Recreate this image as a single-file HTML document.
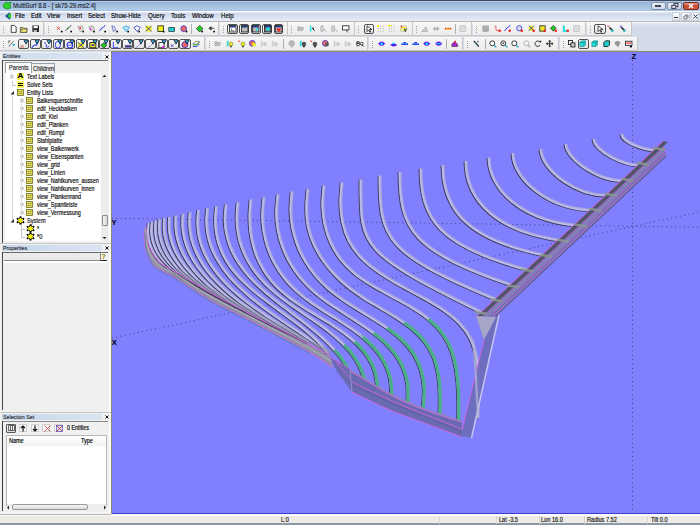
<!DOCTYPE html><html><head><meta charset="utf-8"><style>
*{margin:0;padding:0;box-sizing:border-box}
html,body{width:700px;height:525px;overflow:hidden;background:#f0f0f0;font-family:"Liberation Sans",sans-serif;}
.a{position:absolute}
.t{position:absolute;font-size:7px;line-height:8px;color:#000;white-space:nowrap;-webkit-text-stroke:0.15px currentColor}
svg{overflow:visible}
</style></head><body>
<div class="a" style="left:0px;top:0px;width:700px;height:11px;background:linear-gradient(#404858 0px,#404858 1px,#a8c8f0 1px,#a8c8f0 2px,#97b3d5 2px,#b3cde9 10px,#a0c0e6 10px);"></div>
<svg class="a" style="left:2px;top:1px" width="10" height="9" viewBox="0 0 10 9"><path d="M1 4l3-3 2 1 3-1-1 3 1 3-4 1-3-1z" fill="#2bd32b" stroke="#137a13" stroke-width=".6"/></svg>
<div class="t" style="left:13px;top:1.5px;font-size:7px;color:#1e2530;transform:scaleX(0.85);transform-origin:0 0;">MultiSurf 8.8 - [ sk75-29.ms2:4]</div>
<div class="a" style="left:650.5px;top:1.5px;width:15px;height:8px;background:linear-gradient(#e8eef7,#c9d6e8);border:1px solid #7f8fa6;border-radius:2px;"></div>
<div class="a" style="left:655px;top:5px;width:6px;height:2px;background:#fff;border:1px solid #445;"></div>
<div class="a" style="left:667px;top:1.5px;width:15px;height:8px;background:linear-gradient(#e8eef7,#c9d6e8);border:1px solid #7f8fa6;border-radius:2px;"></div>
<svg class="a" style="left:671px;top:2.5px" width="8" height="6" viewBox="0 0 8 6"><rect x="3" y=".5" width="4" height="3.2" fill="#dde" stroke="#334" stroke-width=".9"/><rect x=".8" y="2.3" width="4" height="3.2" fill="#dde" stroke="#334" stroke-width=".9"/></svg>
<div class="a" style="left:683px;top:1.5px;width:16px;height:8px;background:linear-gradient(#e8a090,#c8452c 50%,#d05a40);border:1px solid #7a3020;border-radius:2px;"></div>
<svg class="a" style="left:688px;top:2.5px" width="6" height="6" viewBox="0 0 6 6"><path d="M1 1l4 4M5 1l-4 4" stroke="#fff" stroke-width="1.4"/></svg>
<div class="a" style="left:0px;top:11px;width:700px;height:11px;background:linear-gradient(#ffffff 0px,#ffffff 1px,#e6eaf4 1px,#ccd6ea 3.5px,#d8e0f0 5px,#e2eafa 9.5px,#e4ecfc 10px,#b8b8b0 10px);"></div>
<svg class="a" style="left:3px;top:11px" width="10" height="10" viewBox="0 0 10 10"><path d="M7 1l-5 4 5 4-1-4z" fill="#1a3a9a"/><path d="M8 2l-4 3 4 3z" fill="#2c2"/></svg>
<div class="t" style="left:14.9px;top:12px;font-size:7px;color:#000;transform:scaleX(0.87);transform-origin:0 0;">File</div>
<div class="t" style="left:30.7px;top:12px;font-size:7px;color:#000;transform:scaleX(0.87);transform-origin:0 0;">Edit</div>
<div class="t" style="left:47.2px;top:12px;font-size:7px;color:#000;transform:scaleX(0.87);transform-origin:0 0;">View</div>
<div class="t" style="left:67.3px;top:12px;font-size:7px;color:#000;transform:scaleX(0.87);transform-origin:0 0;">Insert</div>
<div class="t" style="left:88.3px;top:12px;font-size:7px;color:#000;transform:scaleX(0.87);transform-origin:0 0;">Select</div>
<div class="t" style="left:110.8px;top:12px;font-size:7px;color:#000;transform:scaleX(0.87);transform-origin:0 0;">Show-Hide</div>
<div class="t" style="left:147.5px;top:12px;font-size:7px;color:#000;transform:scaleX(0.87);transform-origin:0 0;">Query</div>
<div class="t" style="left:170.7px;top:12px;font-size:7px;color:#000;transform:scaleX(0.87);transform-origin:0 0;">Tools</div>
<div class="t" style="left:191.8px;top:12px;font-size:7px;color:#000;transform:scaleX(0.87);transform-origin:0 0;">Window</div>
<div class="t" style="left:220.8px;top:12px;font-size:7px;color:#000;transform:scaleX(0.87);transform-origin:0 0;">Help</div>
<div class="a" style="left:671.5px;top:12px;width:8.5px;height:8.5px;background:linear-gradient(#fbfcfe,#e3e9f2);border:1px solid #c5cdd9;"></div>
<div class="a" style="left:681px;top:12px;width:8.5px;height:8.5px;background:linear-gradient(#fbfcfe,#e3e9f2);border:1px solid #c5cdd9;"></div>
<div class="a" style="left:690.5px;top:12px;width:8.5px;height:8.5px;background:linear-gradient(#fbfcfe,#e3e9f2);border:1px solid #c5cdd9;"></div>
<div class="a" style="left:674px;top:17px;width:4px;height:1.2px;background:#333;"></div>
<svg class="a" style="left:683px;top:13.5px" width="6" height="6" viewBox="0 0 6 6"><path d="M2 1h3v3M1 2h3v3h-3z" stroke="#555" stroke-width=".7" fill="none"/></svg>
<svg class="a" style="left:692.5px;top:14px" width="5" height="5" viewBox="0 0 5 5"><path d="M.5 .5l4 4M4.5 .5l-4 4" stroke="#333" stroke-width="1"/></svg>
<div class="a" style="left:0px;top:22px;width:700px;height:30px;background:linear-gradient(#e4e9f2,#d3dbe8 20%,#d4dbe8);"></div>
<div class="a" style="left:0px;top:22px;width:700px;height:1px;background:#f4f6fa;"></div>
<div class="a" style="left:0px;top:22px;width:44px;height:14px;background:linear-gradient(#f7f7f7,#ececec);border-right:1px solid #c8c8c8;border-bottom:1px solid #c8c8c8;"></div><div class="a" style="left:3px;top:26px;width:1px;height:1px;background:#a0a0a0;"></div><div class="a" style="left:3px;top:28px;width:1px;height:1px;background:#a0a0a0;"></div><div class="a" style="left:3px;top:30px;width:1px;height:1px;background:#a0a0a0;"></div><div class="a" style="left:3px;top:32px;width:1px;height:1px;background:#a0a0a0;"></div>
<div class="a" style="left:44.5px;top:22px;width:174.5px;height:14px;background:linear-gradient(#f7f7f7,#ececec);border-right:1px solid #c8c8c8;border-bottom:1px solid #c8c8c8;"></div><div class="a" style="left:47.5px;top:26px;width:1px;height:1px;background:#a0a0a0;"></div><div class="a" style="left:47.5px;top:28px;width:1px;height:1px;background:#a0a0a0;"></div><div class="a" style="left:47.5px;top:30px;width:1px;height:1px;background:#a0a0a0;"></div><div class="a" style="left:47.5px;top:32px;width:1px;height:1px;background:#a0a0a0;"></div>
<div class="a" style="left:219.5px;top:22px;width:68.10000000000002px;height:14px;background:linear-gradient(#f7f7f7,#ececec);border-right:1px solid #c8c8c8;border-bottom:1px solid #c8c8c8;"></div><div class="a" style="left:222.5px;top:26px;width:1px;height:1px;background:#a0a0a0;"></div><div class="a" style="left:222.5px;top:28px;width:1px;height:1px;background:#a0a0a0;"></div><div class="a" style="left:222.5px;top:30px;width:1px;height:1px;background:#a0a0a0;"></div><div class="a" style="left:222.5px;top:32px;width:1px;height:1px;background:#a0a0a0;"></div>
<div class="a" style="left:288px;top:22px;width:66.69999999999999px;height:14px;background:linear-gradient(#f7f7f7,#ececec);border-right:1px solid #c8c8c8;border-bottom:1px solid #c8c8c8;"></div><div class="a" style="left:291px;top:26px;width:1px;height:1px;background:#a0a0a0;"></div><div class="a" style="left:291px;top:28px;width:1px;height:1px;background:#a0a0a0;"></div><div class="a" style="left:291px;top:30px;width:1px;height:1px;background:#a0a0a0;"></div><div class="a" style="left:291px;top:32px;width:1px;height:1px;background:#a0a0a0;"></div>
<div class="a" style="left:355px;top:22px;width:57.60000000000002px;height:14px;background:linear-gradient(#f7f7f7,#ececec);border-right:1px solid #c8c8c8;border-bottom:1px solid #c8c8c8;"></div><div class="a" style="left:358px;top:26px;width:1px;height:1px;background:#a0a0a0;"></div><div class="a" style="left:358px;top:28px;width:1px;height:1px;background:#a0a0a0;"></div><div class="a" style="left:358px;top:30px;width:1px;height:1px;background:#a0a0a0;"></div><div class="a" style="left:358px;top:32px;width:1px;height:1px;background:#a0a0a0;"></div>
<div class="a" style="left:413px;top:22px;width:59.10000000000002px;height:14px;background:linear-gradient(#f7f7f7,#ececec);border-right:1px solid #c8c8c8;border-bottom:1px solid #c8c8c8;"></div><div class="a" style="left:416px;top:26px;width:1px;height:1px;background:#a0a0a0;"></div><div class="a" style="left:416px;top:28px;width:1px;height:1px;background:#a0a0a0;"></div><div class="a" style="left:416px;top:30px;width:1px;height:1px;background:#a0a0a0;"></div><div class="a" style="left:416px;top:32px;width:1px;height:1px;background:#a0a0a0;"></div>
<div class="a" style="left:472.5px;top:22px;width:113.89999999999998px;height:14px;background:linear-gradient(#f7f7f7,#ececec);border-right:1px solid #c8c8c8;border-bottom:1px solid #c8c8c8;"></div><div class="a" style="left:475.5px;top:26px;width:1px;height:1px;background:#a0a0a0;"></div><div class="a" style="left:475.5px;top:28px;width:1px;height:1px;background:#a0a0a0;"></div><div class="a" style="left:475.5px;top:30px;width:1px;height:1px;background:#a0a0a0;"></div><div class="a" style="left:475.5px;top:32px;width:1px;height:1px;background:#a0a0a0;"></div>
<div class="a" style="left:587px;top:22px;width:44.5px;height:14px;background:linear-gradient(#f7f7f7,#ececec);border-right:1px solid #c8c8c8;border-bottom:1px solid #c8c8c8;"></div><div class="a" style="left:590px;top:26px;width:1px;height:1px;background:#a0a0a0;"></div><div class="a" style="left:590px;top:28px;width:1px;height:1px;background:#a0a0a0;"></div><div class="a" style="left:590px;top:30px;width:1px;height:1px;background:#a0a0a0;"></div><div class="a" style="left:590px;top:32px;width:1px;height:1px;background:#a0a0a0;"></div>
<div class="a" style="left:0px;top:37px;width:205.3px;height:14px;background:linear-gradient(#f7f7f7,#ececec);border-right:1px solid #c8c8c8;border-bottom:1px solid #c8c8c8;"></div><div class="a" style="left:3px;top:41px;width:1px;height:1px;background:#a0a0a0;"></div><div class="a" style="left:3px;top:43px;width:1px;height:1px;background:#a0a0a0;"></div><div class="a" style="left:3px;top:45px;width:1px;height:1px;background:#a0a0a0;"></div><div class="a" style="left:3px;top:47px;width:1px;height:1px;background:#a0a0a0;"></div>
<div class="a" style="left:205.8px;top:37px;width:162.7px;height:14px;background:linear-gradient(#f7f7f7,#ececec);border-right:1px solid #c8c8c8;border-bottom:1px solid #c8c8c8;"></div><div class="a" style="left:208.8px;top:41px;width:1px;height:1px;background:#a0a0a0;"></div><div class="a" style="left:208.8px;top:43px;width:1px;height:1px;background:#a0a0a0;"></div><div class="a" style="left:208.8px;top:45px;width:1px;height:1px;background:#a0a0a0;"></div><div class="a" style="left:208.8px;top:47px;width:1px;height:1px;background:#a0a0a0;"></div>
<div class="a" style="left:369px;top:37px;width:94.30000000000001px;height:14px;background:linear-gradient(#f7f7f7,#ececec);border-right:1px solid #c8c8c8;border-bottom:1px solid #c8c8c8;"></div><div class="a" style="left:372px;top:41px;width:1px;height:1px;background:#a0a0a0;"></div><div class="a" style="left:372px;top:43px;width:1px;height:1px;background:#a0a0a0;"></div><div class="a" style="left:372px;top:45px;width:1px;height:1px;background:#a0a0a0;"></div><div class="a" style="left:372px;top:47px;width:1px;height:1px;background:#a0a0a0;"></div>
<div class="a" style="left:463.8px;top:37px;width:95.59999999999997px;height:14px;background:linear-gradient(#f7f7f7,#ececec);border-right:1px solid #c8c8c8;border-bottom:1px solid #c8c8c8;"></div><div class="a" style="left:466.8px;top:41px;width:1px;height:1px;background:#a0a0a0;"></div><div class="a" style="left:466.8px;top:43px;width:1px;height:1px;background:#a0a0a0;"></div><div class="a" style="left:466.8px;top:45px;width:1px;height:1px;background:#a0a0a0;"></div><div class="a" style="left:466.8px;top:47px;width:1px;height:1px;background:#a0a0a0;"></div>
<div class="a" style="left:560px;top:37px;width:78.39999999999998px;height:14px;background:linear-gradient(#f7f7f7,#ececec);border-right:1px solid #c8c8c8;border-bottom:1px solid #c8c8c8;"></div><div class="a" style="left:563px;top:41px;width:1px;height:1px;background:#a0a0a0;"></div><div class="a" style="left:563px;top:43px;width:1px;height:1px;background:#a0a0a0;"></div><div class="a" style="left:563px;top:45px;width:1px;height:1px;background:#a0a0a0;"></div><div class="a" style="left:563px;top:47px;width:1px;height:1px;background:#a0a0a0;"></div>
<div class="a" style="left:190.9px;top:24px;width:1px;height:10px;background:#b0b0b0;"></div>
<div class="a" style="left:455.2px;top:24px;width:1px;height:10px;background:#b0b0b0;"></div>
<div class="a" style="left:227.3px;top:23.8px;width:10.699999999999989px;height:10.400000000000002px;background:linear-gradient(#fafafa,#e4e4e4);border:1px solid #505050;border-radius:2px;"></div>
<div class="a" style="left:238.7px;top:23.8px;width:10.700000000000017px;height:10.400000000000002px;background:linear-gradient(#fafafa,#e4e4e4);border:1px solid #505050;border-radius:2px;"></div>
<div class="a" style="left:250.6px;top:23.8px;width:10.900000000000006px;height:10.400000000000002px;background:linear-gradient(#fafafa,#e4e4e4);border:1px solid #505050;border-radius:2px;"></div>
<div class="a" style="left:262.4px;top:23.8px;width:9.400000000000034px;height:10.400000000000002px;background:linear-gradient(#fafafa,#e4e4e4);border:1px solid #505050;border-radius:2px;"></div>
<div class="a" style="left:273.7px;top:23.8px;width:9.5px;height:10.400000000000002px;background:linear-gradient(#fafafa,#e4e4e4);border:1px solid #505050;border-radius:2px;"></div>
<div class="a" style="left:363.5px;top:23.8px;width:10.699999999999989px;height:10.400000000000002px;background:linear-gradient(#fafafa,#e4e4e4);border:1px solid #505050;border-radius:2px;"></div>
<div class="a" style="left:593.8px;top:23.8px;width:11.900000000000091px;height:10.400000000000002px;background:linear-gradient(#fafafa,#e4e4e4);border:1px solid #505050;border-radius:2px;"></div>
<svg class="a" style="left:229.0px;top:25px" width="8.2" height="8.2" viewBox="0 0 10 10"><rect x=".5" y=".5" width="8" height="8" fill="#fff" stroke="#222"/><rect x="1" y="1" width="7" height="2" fill="#1b3a8a"/><path d="M3 4v3h3" stroke="#333" fill="none" stroke-width=".8"/></svg>
<svg class="a" style="left:240.5px;top:25px" width="8.2" height="8.2" viewBox="0 0 10 10"><rect x=".5" y=".5" width="8" height="8" fill="#bbb" stroke="#222"/><rect x="1" y="1" width="7" height="2" fill="#1b3a8a"/></svg>
<svg class="a" style="left:252.0px;top:25px" width="8.2" height="8.2" viewBox="0 0 10 10"><rect x=".5" y=".5" width="8" height="8" fill="#bbb" stroke="#222"/><rect x="1" y="1" width="7" height="2" fill="#1b3a8a"/><path d="M5 3l3 3-3 2z" fill="#2dd"/></svg>
<svg class="a" style="left:263.5px;top:25px" width="8.2" height="8.2" viewBox="0 0 10 10"><rect x=".5" y=".5" width="8" height="8" fill="#777" stroke="#222"/><rect x="1" y="1" width="7" height="2" fill="#1b3a8a"/><path d="M2 5l3-3 3 3-3 3z" fill="#2dd"/></svg>
<svg class="a" style="left:275.0px;top:25px" width="8.2" height="8.2" viewBox="0 0 10 10"><rect x=".5" y=".5" width="8" height="8" fill="#ddd" stroke="#222"/><rect x="1" y="1" width="7" height="2" fill="#1b3a8a"/><path d="M2 4h5v2l-2.5 2.5-2.5-2.5z" fill="#e22"/></svg>
<svg class="a" style="left:365.0px;top:25px" width="8.2" height="8.2" viewBox="0 0 10 10"><path d="M2.5 1v7l2-2 1.5 3 1-.5-1.5-3h3z" fill="#fff" stroke="#111" stroke-width=".9"/></svg>
<svg class="a" style="left:595.5px;top:25px" width="8.2" height="8.2" viewBox="0 0 10 10"><path d="M2.5 1v7l2-2 1.5 3 1-.5-1.5-3h3z" fill="#fff" stroke="#111" stroke-width=".9"/></svg>
<svg class="a" style="left:9.5px;top:25px" width="8.2" height="8.2" viewBox="0 0 10 10"><path d="M1.5 .5h4l2 2v6.5h-6z" fill="#fff" stroke="#222" stroke-width="1"/></svg>
<svg class="a" style="left:20.0px;top:25px" width="8.2" height="8.2" viewBox="0 0 10 10"><path d="M.5 3h3l1 1h4v5h-8z" fill="#d9c64a" stroke="#333" stroke-width=".8"/><path d="M2 5h7l-1.5 4h-7z" fill="#f2e27a" stroke="#333" stroke-width=".6"/></svg>
<svg class="a" style="left:31.5px;top:25px" width="8.2" height="8.2" viewBox="0 0 10 10"><rect x=".5" y=".5" width="8" height="8" fill="#222"/><rect x="2" y="1" width="5" height="3" fill="#fff"/><rect x="2" y="6" width="4" height="2.5" fill="#bbb"/></svg>
<svg class="a" style="left:55.5px;top:25px" width="8.2" height="8.2" viewBox="0 0 10 10"><path d="M1 2l4 4M5 2l-4 4" stroke="#e03030" stroke-width="1"/><rect x="6" y="7" width="2" height="2" fill="#000"/></svg>
<svg class="a" style="left:65.0px;top:25px" width="8.2" height="8.2" viewBox="0 0 10 10"><path d="M.5 7c2 0 2-4 4-4s2-2 3-3" stroke="#223" stroke-width="1" fill="none"/><circle cx="4" cy="4" r="1" fill="#2b2"/><rect x="6.5" y="7" width="2" height="2" fill="#000"/></svg>
<svg class="a" style="left:76.5px;top:25px" width="8.2" height="8.2" viewBox="0 0 10 10"><path d="M1 2l5-1 2 4-4 3z" fill="#eee" stroke="#777" stroke-width=".7"/><circle cx="4" cy="4" r="1.2" fill="#e22"/><rect x="6.5" y="7" width="2" height="2" fill="#000"/></svg>
<svg class="a" style="left:87.5px;top:25px" width="8.2" height="8.2" viewBox="0 0 10 10"><path d="M1 2l5-1 2 4-4 3z" fill="#ddd" stroke="#777" stroke-width=".7"/><circle cx="3" cy="5" r="1.2" fill="#e2e"/><rect x="6.5" y="7" width="2" height="2" fill="#000"/></svg>
<svg class="a" style="left:99.0px;top:25px" width="8.2" height="8.2" viewBox="0 0 10 10"><path d="M.5 7c2 0 2-4 4-4s2-2 3-3" stroke="#2233ee" stroke-width="1.2" fill="none"/><rect x="6.5" y="7" width="2" height="2" fill="#000"/></svg>
<svg class="a" style="left:110.5px;top:25px" width="8.2" height="8.2" viewBox="0 0 10 10"><path d="M1 1l3 1 2 4-3 2z" fill="#e8e8d0" stroke="#3344cc" stroke-width=".8"/><rect x="6.5" y="7" width="2" height="2" fill="#000"/></svg>
<svg class="a" style="left:122.0px;top:25px" width="8.2" height="8.2" viewBox="0 0 10 10"><path d="M1 3l4-2 4 2-4 5z" fill="#bdf" stroke="#2ad" stroke-width="1"/><rect x="6.5" y="7" width="2" height="2" fill="#000"/></svg>
<svg class="a" style="left:133.0px;top:25px" width="8.2" height="8.2" viewBox="0 0 10 10"><path d="M1 3l4-2 4 2-4 5z" fill="#fff" stroke="#33c" stroke-width="1"/><rect x="6.5" y="7" width="2" height="2" fill="#000"/></svg>
<svg class="a" style="left:145.0px;top:25px" width="8.2" height="8.2" viewBox="0 0 10 10"><rect x="1" y="1" width="7" height="7" fill="#ee2"/><path d="M1 1l7 7M8 1l-7 7" stroke="#33a" stroke-width="1"/></svg>
<svg class="a" style="left:156.5px;top:25px" width="8.2" height="8.2" viewBox="0 0 10 10"><rect x="1" y="1" width="7" height="7" fill="#ee2" stroke="#222" stroke-width="1"/><rect x="7" y="7" width="2" height="2" fill="#000"/></svg>
<svg class="a" style="left:168.0px;top:25px" width="8.2" height="8.2" viewBox="0 0 10 10"><rect x="1" y="3" width="7" height="5" fill="#2cc" stroke="#222" stroke-width=".8"/></svg>
<svg class="a" style="left:179.5px;top:25px" width="8.2" height="8.2" viewBox="0 0 10 10"><circle cx="4.5" cy="4.5" r="3.5" fill="#e66" stroke="#33c" stroke-width="1"/><rect x="7" y="7" width="2" height="2" fill="#000"/></svg>
<svg class="a" style="left:195.5px;top:25px" width="8.2" height="8.2" viewBox="0 0 10 10"><path d="M4.5 .5l4 4-4 4-4-4z" fill="#2c2" stroke="#222" stroke-width=".8"/><rect x="6.5" y="7" width="2" height="2" fill="#000"/></svg>
<svg class="a" style="left:208.0px;top:25px" width="8.2" height="8.2" viewBox="0 0 10 10"><path d="M1 4l3-2v4z M4 4h4" stroke="#333" stroke-width=".9" fill="#333"/><rect x="6.5" y="7" width="2" height="2" fill="#000"/></svg>
<svg class="a" style="left:296.5px;top:25px" width="8.2" height="8.2" viewBox="0 0 10 10"><path d="M1 2h3v5h-3zM5 3h3l-1 4h-2z" fill="#bbb" stroke="#999" stroke-width=".5"/></svg>
<svg class="a" style="left:308.5px;top:25px" width="8.2" height="8.2" viewBox="0 0 10 10"><rect x="1" y="1" width="2" height="7" fill="#3dd"/><path d="M4 4l3 3" stroke="#222" stroke-width="1.2"/><rect x="4" y="3" width="2" height="2" fill="#444"/></svg>
<svg class="a" style="left:319.5px;top:25px" width="8.2" height="8.2" viewBox="0 0 10 10"><rect x="1" y="1" width="3" height="7" fill="#ccc" stroke="#999" stroke-width=".5"/><path d="M5 5l3 3" stroke="#999" stroke-width="1"/></svg>
<svg class="a" style="left:331.0px;top:25px" width="8.2" height="8.2" viewBox="0 0 10 10"><rect x="1" y="1" width="3" height="7" fill="#ccc" stroke="#999" stroke-width=".5"/><path d="M5 5l3 3" stroke="#999" stroke-width="1"/></svg>
<svg class="a" style="left:341.5px;top:25px" width="8.2" height="8.2" viewBox="0 0 10 10"><rect x=".5" y="1" width="8" height="5" fill="#fff" stroke="#222"/><path d="M5 6l2 3" stroke="#222"/></svg>
<svg class="a" style="left:376.5px;top:25px" width="8.2" height="8.2" viewBox="0 0 10 10"><g fill="#999"><rect x="1" y="1" width="1" height="1"/><rect x="4" y="1" width="1" height="1"/><rect x="7" y="1" width="1" height="1"/><rect x="1" y="4" width="1" height="1"/><rect x="4" y="4" width="1" height="1"/><rect x="7" y="4" width="1" height="1"/><rect x="1" y="7" width="1" height="1"/><rect x="4" y="7" width="1" height="1"/><rect x="7" y="7" width="1" height="1"/></g><rect x="0" y="0" width="2.5" height="2.5" fill="#ee0"/></svg>
<svg class="a" style="left:388.0px;top:25px" width="8.2" height="8.2" viewBox="0 0 10 10"><g fill="#999"><rect x="1" y="1" width="1" height="1"/><rect x="4" y="1" width="1" height="1"/><rect x="7" y="1" width="1" height="1"/><rect x="1" y="4" width="1" height="1"/><rect x="4" y="4" width="1" height="1"/><rect x="7" y="4" width="1" height="1"/><rect x="1" y="7" width="1" height="1"/><rect x="4" y="7" width="1" height="1"/><rect x="7" y="7" width="1" height="1"/></g><rect x="0" y="0" width="4" height="1.5" fill="#ee0"/></svg>
<svg class="a" style="left:399.5px;top:25px" width="8.2" height="8.2" viewBox="0 0 10 10"><rect x="1" y="1" width="7" height="7" fill="none" stroke="#aaa" stroke-width=".6"/><rect x="1" y="2" width="7" height="1.5" fill="#ee0"/><rect x="1" y="5" width="7" height="1.5" fill="#ee0"/><circle cx="2" cy="2" r="1" fill="#e22"/><path d="M5 4l1.5 4 1.5-4" stroke="#222" fill="none"/></svg>
<svg class="a" style="left:420.5px;top:25px" width="8.2" height="8.2" viewBox="0 0 10 10"><path d="M1 8l5-6 2 6z" fill="#ccc" stroke="#999" stroke-width=".7"/></svg>
<svg class="a" style="left:432.0px;top:25px" width="8.2" height="8.2" viewBox="0 0 10 10"><path d="M1 4.5l3-3v6zM4 4.5l3-3v6z" fill="#aaa"/><rect x="6" y="3.5" width="3" height="2" fill="#aaa"/></svg>
<svg class="a" style="left:444.0px;top:25px" width="8.2" height="8.2" viewBox="0 0 10 10"><rect x="1" y="3.5" width="8" height="2" fill="#ee0"/><circle cx="2" cy="4.5" r="1" fill="#e22"/><circle cx="5" cy="4.5" r="1" fill="#e22"/><circle cx="8" cy="4.5" r="1" fill="#e22"/></svg>
<svg class="a" style="left:459.0px;top:25px" width="8.2" height="8.2" viewBox="0 0 10 10"><rect x="1" y="1" width="7" height="7" fill="#ddd" stroke="#aaa" stroke-width=".6"/></svg>
<svg class="a" style="left:481.5px;top:25px" width="8.2" height="8.2" viewBox="0 0 10 10"><rect x="1" y="1" width="7" height="7" fill="#bbb" stroke="#999" stroke-width=".6"/><path d="M1 3h7M1 5h7M1 7h7" stroke="#888" stroke-width=".5"/></svg>
<svg class="a" style="left:493.5px;top:25px" width="8.2" height="8.2" viewBox="0 0 10 10"><path d="M1 1l2 2M3 1l-2 2" stroke="#e22" stroke-width=".9"/><path d="M2 4c0 3 3 3 5 3" stroke="#e22" fill="none"/><circle cx="7" cy="7" r="1.6" fill="#e22"/></svg>
<svg class="a" style="left:504.0px;top:25px" width="8.2" height="8.2" viewBox="0 0 10 10"><path d="M.5 7c2 0 2-4 4-4s2-2 3-3" stroke="#22e" stroke-width="1.1" fill="none"/><circle cx="7" cy="7" r="1.6" fill="#e22"/></svg>
<svg class="a" style="left:515.5px;top:25px" width="8.2" height="8.2" viewBox="0 0 10 10"><circle cx="4" cy="4" r="3.2" fill="#dde" stroke="#33c" stroke-width="1"/><circle cx="7" cy="7" r="1.6" fill="#e22"/></svg>
<svg class="a" style="left:528.0px;top:25px" width="8.2" height="8.2" viewBox="0 0 10 10"><rect x="1" y="1" width="6" height="6" fill="#ee2"/><path d="M1 1l6 6M7 1l-6 6" stroke="#33a" stroke-width="1"/><circle cx="7" cy="7" r="1.6" fill="#e22"/></svg>
<svg class="a" style="left:538.5px;top:25px" width="8.2" height="8.2" viewBox="0 0 10 10"><rect x="1" y="1" width="6.5" height="6.5" fill="#ee2" stroke="#222" stroke-width="1"/><circle cx="7" cy="7" r="1.6" fill="#e22"/></svg>
<svg class="a" style="left:550.0px;top:25px" width="8.2" height="8.2" viewBox="0 0 10 10"><path d="M4 .5l3.5 3.5-3.5 3.5-3.5-3.5z" fill="#2c2" stroke="#222" stroke-width=".8"/><circle cx="7" cy="7" r="1.6" fill="#e22"/></svg>
<svg class="a" style="left:561.5px;top:25px" width="8.2" height="8.2" viewBox="0 0 10 10"><path d="M1 .5h2.5v6h3v2h-5.5z" fill="#2dd"/><circle cx="7" cy="7" r="1.6" fill="#e22"/></svg>
<svg class="a" style="left:573.0px;top:25px" width="8.2" height="8.2" viewBox="0 0 10 10"><rect x="1" y="1" width="7" height="7" fill="#ddd" stroke="#aaa" stroke-width=".6"/></svg>
<svg class="a" style="left:607.0px;top:25px" width="8.2" height="8.2" viewBox="0 0 10 10"><path d="M.5 .5l2 2M2.5 .5l-2 2" stroke="#e22" stroke-width=".8"/><path d="M3 3l4 4" stroke="#222" stroke-width="2"/><circle cx="6.5" cy="7" r="1.6" fill="#2bb"/></svg>
<svg class="a" style="left:619.0px;top:25px" width="8.2" height="8.2" viewBox="0 0 10 10"><path d="M1 3l3-2M1 1l3 2" stroke="#22e" stroke-width=".8"/><path d="M3 3l4 4" stroke="#222" stroke-width="2"/><circle cx="6.5" cy="7" r="1.6" fill="#2bb"/></svg>
<svg class="a" style="left:8.0px;top:39.8px" width="8.2" height="8.2" viewBox="0 0 10 10"><path d="M1 1l2 0M1 1v3M7 1l-6 7" stroke="#222" stroke-width=".8" fill="none"/><path d="M5 5l4 0-2 3z" fill="#2ad"/></svg>
<div class="a" style="left:18.2px;top:38.8px;width:11.2px;height:10.0px;background:linear-gradient(#fafafa,#e4e4e4);border:1px solid #505050;border-radius:2px;"></div>
<svg class="a" style="left:19.5px;top:39.6px" width="8.6" height="8.6" viewBox="0 0 10 10"><path d="M1 6l3 3M4 6l-3 3" stroke="#e03030" stroke-width=".9"/><path d="M4 .3h6l-3 5z" fill="#0c1440"/><circle cx="7" cy="1.6" r="1.1" fill="#30e0e0"/></svg>
<div class="a" style="left:29.72px;top:38.8px;width:11.200000000000003px;height:10.0px;background:linear-gradient(#fafafa,#e4e4e4);border:1px solid #505050;border-radius:2px;"></div>
<svg class="a" style="left:31.0px;top:39.6px" width="8.6" height="8.6" viewBox="0 0 10 10"><path d="M1 9l2.5-3h2.5l2-3" stroke="#2a3af0" stroke-width="1.2" fill="none"/><path d="M4 .3h6l-3 5z" fill="#0c1440"/><circle cx="7" cy="1.6" r="1.1" fill="#30e0e0"/></svg>
<div class="a" style="left:41.239999999999995px;top:38.8px;width:11.200000000000003px;height:10.0px;background:linear-gradient(#fafafa,#e4e4e4);border:1px solid #505050;border-radius:2px;"></div>
<svg class="a" style="left:42.5px;top:39.6px" width="8.6" height="8.6" viewBox="0 0 10 10"><path d="M2 2c-1 2 3 3 2 5s2 2 3 0" stroke="#2a3af0" stroke-width="1.1" fill="none"/><path d="M4 .3h6l-3 5z" fill="#0c1440"/><circle cx="7" cy="1.6" r="1.1" fill="#30e0e0"/></svg>
<div class="a" style="left:52.760000000000005px;top:38.8px;width:11.200000000000003px;height:10.0px;background:linear-gradient(#fafafa,#e4e4e4);border:1px solid #505050;border-radius:2px;"></div>
<svg class="a" style="left:54.0px;top:39.6px" width="8.6" height="8.6" viewBox="0 0 10 10"><ellipse cx="4.5" cy="5.5" rx="3" ry="4" stroke="#2a3af0" stroke-width="1.1" fill="none"/><path d="M4 .3h6l-3 5z" fill="#0c1440"/><circle cx="7" cy="1.6" r="1.1" fill="#30e0e0"/></svg>
<div class="a" style="left:64.28px;top:38.8px;width:11.200000000000003px;height:10.0px;background:linear-gradient(#fafafa,#e4e4e4);border:1px solid #505050;border-radius:2px;"></div>
<svg class="a" style="left:65.5px;top:39.6px" width="8.6" height="8.6" viewBox="0 0 10 10"><circle cx="4.5" cy="6" r="3.3" stroke="#2a3af0" stroke-width="1.2" fill="#e8e8d8"/><path d="M1.5 6h6" stroke="#2a3af0" stroke-width=".8"/><path d="M4 .3h6l-3 5z" fill="#0c1440"/><circle cx="7" cy="1.6" r="1.1" fill="#30e0e0"/></svg>
<div class="a" style="left:75.8px;top:38.8px;width:11.200000000000003px;height:10.0px;background:linear-gradient(#fafafa,#e4e4e4);border:1px solid #505050;border-radius:2px;"></div>
<svg class="a" style="left:77.0px;top:39.6px" width="8.6" height="8.6" viewBox="0 0 10 10"><rect x="1" y="3" width="7" height="6" fill="#ee2"/><path d="M1 3l7 6M8 3l-7 6" stroke="#33a" stroke-width="1"/><path d="M4 .3h6l-3 5z" fill="#0c1440"/><circle cx="7" cy="1.6" r="1.1" fill="#30e0e0"/></svg>
<div class="a" style="left:87.32000000000001px;top:38.8px;width:11.200000000000003px;height:10.0px;background:linear-gradient(#fafafa,#e4e4e4);border:1px solid #505050;border-radius:2px;"></div>
<svg class="a" style="left:88.5px;top:39.6px" width="8.6" height="8.6" viewBox="0 0 10 10"><rect x="1" y="3" width="7" height="6" fill="#ee2" stroke="#222" stroke-width="1"/><rect x="3" y="5" width="3" height="2" fill="#33a"/><path d="M4 .3h6l-3 5z" fill="#0c1440"/><circle cx="7" cy="1.6" r="1.1" fill="#30e0e0"/></svg>
<div class="a" style="left:98.84px;top:38.8px;width:11.200000000000003px;height:10.0px;background:linear-gradient(#fafafa,#e4e4e4);border:1px solid #505050;border-radius:2px;"></div>
<svg class="a" style="left:100.0px;top:39.6px" width="8.6" height="8.6" viewBox="0 0 10 10"><path d="M4.5 3l3.5 3-3.5 3.5-3.5-3.5z" fill="#2c2" stroke="#222" stroke-width=".8"/><path d="M4 .3h6l-3 5z" fill="#0c1440"/><circle cx="7" cy="1.6" r="1.1" fill="#30e0e0"/></svg>
<div class="a" style="left:110.36px;top:38.8px;width:11.200000000000003px;height:10.0px;background:linear-gradient(#fafafa,#e4e4e4);border:1px solid #505050;border-radius:2px;"></div>
<svg class="a" style="left:112.0px;top:39.6px" width="8.6" height="8.6" viewBox="0 0 10 10"><path d="M1.5 2v7h6" stroke="#2a3af0" stroke-width="1.1" fill="none"/><path d="M4 .3h6l-3 5z" fill="#0c1440"/><circle cx="7" cy="1.6" r="1.1" fill="#30e0e0"/></svg>
<div class="a" style="left:121.88px;top:38.8px;width:11.199999999999989px;height:10.0px;background:linear-gradient(#fafafa,#e4e4e4);border:1px solid #505050;border-radius:2px;"></div>
<svg class="a" style="left:123.5px;top:39.6px" width="8.6" height="8.6" viewBox="0 0 10 10"><rect x="1" y="6" width="8" height="3" fill="#666"/><rect x="2" y="6.5" width="6" height="1.5" fill="#33c"/><path d="M4 .3h6l-3 5z" fill="#0c1440"/><circle cx="7" cy="1.6" r="1.1" fill="#30e0e0"/></svg>
<div class="a" style="left:133.39999999999998px;top:38.8px;width:11.199999999999989px;height:10.0px;background:linear-gradient(#fafafa,#e4e4e4);border:1px solid #505050;border-radius:2px;"></div>
<svg class="a" style="left:135.0px;top:39.6px" width="8.6" height="8.6" viewBox="0 0 10 10"><path d="M1 9l6-5" stroke="#22c" stroke-width=".9" stroke-dasharray="1.2 1"/><path d="M4 .3h6l-3 5z" fill="#0c1440"/><circle cx="7" cy="1.6" r="1.1" fill="#30e0e0"/></svg>
<div class="a" style="left:144.92px;top:38.8px;width:11.199999999999989px;height:10.0px;background:linear-gradient(#fafafa,#e4e4e4);border:1px solid #505050;border-radius:2px;"></div>
<svg class="a" style="left:146.5px;top:39.6px" width="8.6" height="8.6" viewBox="0 0 10 10"><path d="M1 9l6-5" stroke="#22c" stroke-width=".9" stroke-dasharray="1.2 1"/><path d="M4 .3h6l-3 5z" fill="#0c1440"/><circle cx="7" cy="1.6" r="1.1" fill="#30e0e0"/></svg>
<div class="a" style="left:156.44px;top:38.8px;width:11.199999999999989px;height:10.0px;background:linear-gradient(#fafafa,#e4e4e4);border:1px solid #505050;border-radius:2px;"></div>
<svg class="a" style="left:158.0px;top:39.6px" width="8.6" height="8.6" viewBox="0 0 10 10"><rect x="1" y="3" width="6" height="6" fill="#fff" stroke="#222"/><circle cx="6" cy="8" r="1.3" fill="#e2e"/><path d="M4 .3h6l-3 5z" fill="#0c1440"/><circle cx="7" cy="1.6" r="1.1" fill="#30e0e0"/></svg>
<div class="a" style="left:167.95999999999998px;top:38.8px;width:11.199999999999989px;height:10.0px;background:linear-gradient(#fafafa,#e4e4e4);border:1px solid #505050;border-radius:2px;"></div>
<svg class="a" style="left:169.5px;top:39.6px" width="8.6" height="8.6" viewBox="0 0 10 10"><path d="M1 5l3 3M4 5l-3 3" stroke="#22c" stroke-width=".9"/><path d="M4 .3h6l-3 5z" fill="#0c1440"/><circle cx="7" cy="1.6" r="1.1" fill="#30e0e0"/></svg>
<div class="a" style="left:179.48px;top:38.8px;width:11.199999999999989px;height:10.0px;background:linear-gradient(#fafafa,#e4e4e4);border:1px solid #505050;border-radius:2px;"></div>
<svg class="a" style="left:181.0px;top:39.6px" width="8.6" height="8.6" viewBox="0 0 10 10"><circle cx="4.5" cy="5.5" r="3.5" fill="#e66" stroke="#33c" stroke-width="1"/><path d="M4 .3h6l-3 5z" fill="#0c1440"/><circle cx="7" cy="1.6" r="1.1" fill="#30e0e0"/></svg>
<div class="a" style="left:282.5px;top:39px;width:1px;height:10px;background:#b0b0b0;"></div>
<div class="a" style="left:446.4px;top:39px;width:1px;height:10px;background:#b0b0b0;"></div>
<div class="a" style="left:484.7px;top:39px;width:1px;height:10px;background:#b0b0b0;"></div>
<div class="a" style="left:577.6px;top:38.8px;width:11.399999999999977px;height:10.0px;background:linear-gradient(#fafafa,#e4e4e4);border:1px solid #505050;border-radius:2px;"></div>
<svg class="a" style="left:579.0px;top:39.8px" width="8.2" height="8.2" viewBox="0 0 10 10"><path d="M1 3l2-2h5v5l-2 2h-5z" fill="#2dd" stroke="#166" stroke-width=".6"/><path d="M1 3h5v5M6 3l2-2" stroke="#166" fill="none" stroke-width=".6"/></svg>
<svg class="a" style="left:192.0px;top:39.8px" width="8.2" height="8.2" viewBox="0 0 10 10"><path d="M1 5l3-3h5l-3 3z" fill="#fff" stroke="#222" stroke-width=".6"/><path d="M1 6h5l3-3" stroke="#2a2" stroke-width="1.2" fill="none"/><path d="M1 8h5l3-3" stroke="#22c" stroke-width="1" fill="none"/></svg>
<svg class="a" style="left:214.0px;top:39.8px" width="8.2" height="8.2" viewBox="0 0 10 10"><path d="M1 2h3v5h-3zM5 3h3l-1 4h-2z" fill="#bbb" stroke="#999" stroke-width=".5"/></svg>
<svg class="a" style="left:225.5px;top:39.8px" width="8.2" height="8.2" viewBox="0 0 10 10"><rect x="1" y="1" width="2" height="7" fill="#3dd"/><circle cx="6" cy="5" r="2.5" fill="#ee2" stroke="#444" stroke-width=".5"/><rect x="5" y="7" width="2" height="2" fill="#444"/></svg>
<svg class="a" style="left:237.5px;top:39.8px" width="8.2" height="8.2" viewBox="0 0 10 10"><path d="M.5 .5l2 2M2.5 .5l-2 2" stroke="#e22" stroke-width=".8"/><circle cx="6" cy="5" r="2.5" fill="#ee2" stroke="#444" stroke-width=".5"/><rect x="5" y="7" width="2" height="2" fill="#444"/></svg>
<svg class="a" style="left:248.5px;top:39.8px" width="8.2" height="8.2" viewBox="0 0 10 10"><circle cx="4" cy="4" r="3.5" fill="#e66" stroke="#33c" stroke-width="1"/><circle cx="6" cy="5.5" r="2.3" fill="#ee2"/></svg>
<svg class="a" style="left:260.0px;top:39.8px" width="8.2" height="8.2" viewBox="0 0 10 10"><rect x="1" y="1" width="2" height="7" fill="#ccc"/><circle cx="6" cy="5" r="2.5" fill="#ccc"/></svg>
<svg class="a" style="left:271.0px;top:39.8px" width="8.2" height="8.2" viewBox="0 0 10 10"><rect x="1" y="1" width="2" height="7" fill="#ccc"/><circle cx="6" cy="5" r="2.5" fill="#ccc"/></svg>
<svg class="a" style="left:287.5px;top:39.8px" width="8.2" height="8.2" viewBox="0 0 10 10"><circle cx="4.5" cy="4" r="3.5" fill="#bbb" stroke="#999" stroke-width=".5"/><rect x="3.5" y="7" width="2" height="2" fill="#aaa"/></svg>
<svg class="a" style="left:298.5px;top:39.8px" width="8.2" height="8.2" viewBox="0 0 10 10"><rect x="1" y="1" width="2" height="7" fill="#3dd"/><circle cx="6" cy="5" r="2.5" fill="#555" stroke="#222" stroke-width=".5"/><rect x="5" y="7" width="2" height="2" fill="#222"/></svg>
<svg class="a" style="left:309.5px;top:39.8px" width="8.2" height="8.2" viewBox="0 0 10 10"><path d="M.5 .5l2 2M2.5 .5l-2 2" stroke="#e22" stroke-width=".8"/><circle cx="6" cy="5" r="2.5" fill="#555" stroke="#222" stroke-width=".5"/><rect x="5" y="7" width="2" height="2" fill="#222"/></svg>
<svg class="a" style="left:321.5px;top:39.8px" width="8.2" height="8.2" viewBox="0 0 10 10"><circle cx="4" cy="4" r="3.5" fill="#e66" stroke="#33c" stroke-width="1"/><circle cx="6" cy="5.5" r="2.3" fill="#555"/></svg>
<svg class="a" style="left:333.0px;top:39.8px" width="8.2" height="8.2" viewBox="0 0 10 10"><rect x="1" y="1" width="2" height="7" fill="#ccc"/><circle cx="6" cy="5" r="2.5" fill="#ccc"/></svg>
<svg class="a" style="left:344.0px;top:39.8px" width="8.2" height="8.2" viewBox="0 0 10 10"><rect x="1" y="1" width="2" height="7" fill="#ccc"/><circle cx="6" cy="5" r="2.5" fill="#ccc"/></svg>
<svg class="a" style="left:356.0px;top:39.8px" width="8.2" height="8.2" viewBox="0 0 10 10"><path d="M1 2h2.5c1 0 1 2 0 2h-2.5zM1 4h2.5c1.3 0 1.3 3 0 3h-2.5z" stroke="#111" fill="none" stroke-width=".9"/><circle cx="7" cy="4.5" r="1.7" fill="none" stroke="#111" stroke-width=".9"/><path d="M7.5 6l1.5 2" stroke="#111"/></svg>
<svg class="a" style="left:378.0px;top:39.8px" width="8.2" height="8.2" viewBox="0 0 10 10"><path d="M.5 4.5c2-3 6-3 8 0-2 3-6 3-8 0z" fill="#22e" stroke="#e2e" stroke-width=".5"/><circle cx="4.5" cy="4.5" r="1.5" fill="#2ee"/></svg>
<svg class="a" style="left:390.0px;top:39.8px" width="8.2" height="8.2" viewBox="0 0 10 10"><path d="M.5 6c2-2 6-2 8 0-2 2-6 2-8 0z" fill="#22e" stroke="#e2e" stroke-width=".5"/><path d="M2.5 5l2-3 2 3z" fill="#2ee"/></svg>
<svg class="a" style="left:400.5px;top:39.8px" width="8.2" height="8.2" viewBox="0 0 10 10"><path d="M.5 4h8v2h-8z" fill="#22e"/><path d="M1 4.5h7" stroke="#2ee" stroke-width=".8"/><rect x="3" y="2.5" width="3" height="1.5" fill="#22e"/></svg>
<svg class="a" style="left:412.0px;top:39.8px" width="8.2" height="8.2" viewBox="0 0 10 10"><path d="M.5 4h8v2h-8z" fill="#22e"/><path d="M1 4.5h7" stroke="#2ee" stroke-width=".8"/><rect x="3" y="2.5" width="3" height="1.5" fill="#22e"/></svg>
<svg class="a" style="left:423.0px;top:39.8px" width="8.2" height="8.2" viewBox="0 0 10 10"><path d="M.5 4.5c2-3 6-3 8 0-2 3-6 3-8 0z" fill="#22e" stroke="#e2e" stroke-width=".5"/><circle cx="4.5" cy="4.5" r="1.5" fill="#2ee"/></svg>
<svg class="a" style="left:435.0px;top:39.8px" width="8.2" height="8.2" viewBox="0 0 10 10"><path d="M.5 4.5c2-3 6-3 8 0-2 3-6 3-8 0z" fill="#22e" stroke="#e2e" stroke-width=".5"/><path d="M2 4.5h5" stroke="#2ee" stroke-width="1.2"/></svg>
<svg class="a" style="left:451.0px;top:39.8px" width="8.2" height="8.2" viewBox="0 0 10 10"><path d="M1 5l3.5-3 3.5 3v3h-7z" fill="#a2c" stroke="#222" stroke-width=".6"/><rect x="4" y="1" width="2" height="2" fill="#e22"/></svg>
<svg class="a" style="left:473.0px;top:39.8px" width="8.2" height="8.2" viewBox="0 0 10 10"><path d="M1 1l6 7" stroke="#222" stroke-width="1.6"/><path d="M2 2l5 6" stroke="#2ad" stroke-width=".6"/><path d="M6 1v2M5 2h2" stroke="#222" stroke-width=".6"/></svg>
<svg class="a" style="left:488.5px;top:39.8px" width="8.2" height="8.2" viewBox="0 0 10 10"><circle cx="4" cy="4" r="3" fill="#fff" stroke="#222" stroke-width="1.1"/><path d="M6 6l3 3" stroke="#2ab" stroke-width="1.6"/></svg>
<svg class="a" style="left:500.0px;top:39.8px" width="8.2" height="8.2" viewBox="0 0 10 10"><circle cx="4" cy="4" r="3" fill="#fff" stroke="#222" stroke-width="1.1"/><path d="M2.5 4h3M4 2.5v3" stroke="#222" stroke-width=".7"/><path d="M6 6l3 3" stroke="#2ab" stroke-width="1.6"/></svg>
<svg class="a" style="left:511.0px;top:39.8px" width="8.2" height="8.2" viewBox="0 0 10 10"><circle cx="4" cy="4" r="3" fill="#fff" stroke="#222" stroke-width="1.1"/><path d="M6 6l3 3" stroke="#2ab" stroke-width="1.6"/></svg>
<svg class="a" style="left:523.0px;top:39.8px" width="8.2" height="8.2" viewBox="0 0 10 10"><circle cx="4" cy="4" r="3" fill="#f4f4f4" stroke="#aaa" stroke-width="1"/><path d="M6 6l3 3" stroke="#aaa" stroke-width="1.4"/></svg>
<svg class="a" style="left:534.0px;top:39.8px" width="8.2" height="8.2" viewBox="0 0 10 10"><path d="M7.5 3A3.3 3.3 0 1 0 7.5 6" stroke="#222" stroke-width="1.1" fill="none"/><path d="M6 1.5l2.5 2 .5-3z" fill="#222"/></svg>
<svg class="a" style="left:545.5px;top:39.8px" width="8.2" height="8.2" viewBox="0 0 10 10"><path d="M4.5 .5v8M.5 4.5h8" stroke="#222" stroke-width="1.1"/><path d="M4.5 0l2 2h-4zM4.5 9l2-2h-4zM0 4.5l2 2v-4zM9 4.5l-2 2v-4z" fill="#222"/></svg>
<svg class="a" style="left:567.5px;top:39.8px" width="8.2" height="8.2" viewBox="0 0 10 10"><rect x=".5" y=".5" width="5" height="5" fill="#fff" stroke="#111"/><rect x="3.5" y="3.5" width="5" height="5" fill="#ccc" stroke="#111"/></svg>
<svg class="a" style="left:591.0px;top:39.8px" width="8.2" height="8.2" viewBox="0 0 10 10"><path d="M1 3l2-2h5v5l-2 2h-5z" fill="#2dd" stroke="#166" stroke-width=".6"/><path d="M1 3h5v5M6 3l2-2" stroke="#166" fill="none" stroke-width=".6"/></svg>
<svg class="a" style="left:602.5px;top:39.8px" width="8.2" height="8.2" viewBox="0 0 10 10"><path d="M1 3l2-2h5v5l-2 2h-5z" fill="#2cc" stroke="#111" stroke-width="1"/></svg>
<svg class="a" style="left:613.5px;top:39.8px" width="8.2" height="8.2" viewBox="0 0 10 10"><path d="M1 2l4-1 3 2-3 6-4-4z" fill="#999"/></svg>
<svg class="a" style="left:624.5px;top:39.8px" width="8.2" height="8.2" viewBox="0 0 10 10"><rect x=".5" y="1.5" width="8" height="5" fill="#fff" stroke="#222"/><rect x="1.5" y="3" width="6" height="1.5" fill="#e33"/><rect x="6" y="7" width="2.5" height="2" fill="#000"/></svg>
<div class="a" style="left:0px;top:52px;width:111px;height:462px;background:#f0f0f0;"></div>
<div class="a" style="left:109px;top:52px;width:2px;height:462px;background:#fbfbfb;"></div>
<div class="a" style="left:2px;top:53px;width:100px;height:6px;background:linear-gradient(90deg,#cddcec,#dbe6f2);"></div>
<div class="t" style="left:3px;top:52px;font-size:6px;color:#303038;transform:scaleX(0.88);transform-origin:0 0;">Entities</div>
<svg class="a" style="left:104.5px;top:54.5px" width="4" height="4" viewBox="0 0 4 4"><path d="M.5 .5l3 3M3.5 .5l-3 3" stroke="#111" stroke-width="1"/></svg>
<div class="a" style="left:2px;top:60px;width:106px;height:1.2px;background:#6a6a6a;"></div>
<div class="a" style="left:2px;top:60px;width:1px;height:183px;background:#444;"></div>
<div class="a" style="left:31px;top:63px;width:24px;height:9.5px;background:#f0f0f0;border:1px solid #9aa0a8;border-bottom:none;"></div>
<div class="a" style="left:5px;top:62px;width:26.5px;height:11px;background:#fcfcfc;border:1px solid #9aa0a8;border-bottom:none;"></div>
<div class="t" style="left:9px;top:63.5px;font-size:6.5px;color:#222;transform:scaleX(0.88);transform-origin:0 0;">Parents</div>
<div class="t" style="left:33px;top:64.5px;font-size:6.5px;color:#222;transform:scaleX(0.88);transform-origin:0 0;">Children</div>
<div class="a" style="left:5px;top:72.5px;width:96px;height:168px;background:#fff;"></div>
<div class="a" style="left:101px;top:72.5px;width:7px;height:168px;background:#ececec;"></div>
<svg class="a" style="left:102px;top:74px" width="5" height="4" viewBox="0 0 5 4"><path d="M.5 3l2-2 2 2z" fill="#222"/></svg>
<svg class="a" style="left:102px;top:235.5px" width="5" height="4" viewBox="0 0 5 4"><path d="M.5 1l2 2 2-2z" fill="#222"/></svg>
<div class="a" style="left:101.5px;top:215px;width:6px;height:10.5px;background:linear-gradient(90deg,#f4f4f4,#d8d8d8);border:1px solid #8a8a8a;border-radius:1px;"></div>
<svg class="a" style="left:10px;top:74.2px" width="5" height="5" viewBox="0 0 5 5"><path d="M1 .5l3 2-3 2z" fill="none" stroke="#999" stroke-width=".7"/></svg>
<div class="a" style="left:17px;top:73.2px;width:6.5px;height:7px;background:#f5f55a;"></div>
<div class="t" style="left:17.6px;top:72.2px;font-size:8px;color:#000;font-weight:bold;">A</div>
<div class="t" style="left:27px;top:72.7px;font-size:6.5px;color:#000;transform:scaleX(0.83);transform-origin:0 0;">Text Labels</div>
<div class="a" style="left:17px;top:81.2px;width:6.5px;height:7px;background:#f5f55a;"></div>
<div class="a" style="left:18px;top:82.7px;width:4.5px;height:1.2px;background:#000;"></div>
<div class="a" style="left:18px;top:85.2px;width:4.5px;height:1.2px;background:#000;"></div>
<div class="t" style="left:27px;top:80.7px;font-size:6.5px;color:#000;transform:scaleX(0.83);transform-origin:0 0;">Solve Sets</div>
<svg class="a" style="left:10px;top:90.2px" width="5" height="5" viewBox="0 0 5 5"><path d="M4 1v3.5h-3.5z" fill="#222"/></svg>
<svg class="a" style="left:17px;top:89.2px" width="7" height="7" viewBox="0 0 7 7"><rect x=".5" y=".5" width="6" height="6" fill="#e6e060" stroke="#6b6b20" stroke-width=".8"/><path d="M1.5 2.5h4M1.5 4.5h4" stroke="#6b6b20" stroke-width=".6"/></svg>
<div class="t" style="left:27px;top:88.7px;font-size:6.5px;color:#000;transform:scaleX(0.83);transform-origin:0 0;">Entity Lists</div>
<svg class="a" style="left:19.5px;top:98.2px" width="5" height="5" viewBox="0 0 5 5"><path d="M1 .5l3 2-3 2z" fill="none" stroke="#999" stroke-width=".7"/></svg>
<svg class="a" style="left:26px;top:97.2px" width="7" height="7" viewBox="0 0 7 7"><rect x=".5" y=".5" width="6" height="6" fill="#e6e060" stroke="#6b6b20" stroke-width=".8"/><path d="M1.5 2.5h4M1.5 4.5h4" stroke="#6b6b20" stroke-width=".6"/></svg>
<div class="t" style="left:36.5px;top:96.7px;font-size:6.5px;color:#000;transform:scaleX(0.83);transform-origin:0 0;">Balkenquerschnitte</div>
<svg class="a" style="left:19.5px;top:106.2px" width="5" height="5" viewBox="0 0 5 5"><path d="M1 .5l3 2-3 2z" fill="none" stroke="#999" stroke-width=".7"/></svg>
<svg class="a" style="left:26px;top:105.2px" width="7" height="7" viewBox="0 0 7 7"><rect x=".5" y=".5" width="6" height="6" fill="#e6e060" stroke="#6b6b20" stroke-width=".8"/><path d="M1.5 2.5h4M1.5 4.5h4" stroke="#6b6b20" stroke-width=".6"/></svg>
<div class="t" style="left:36.5px;top:104.7px;font-size:6.5px;color:#000;transform:scaleX(0.83);transform-origin:0 0;">edit_Heckbalken</div>
<svg class="a" style="left:19.5px;top:114.2px" width="5" height="5" viewBox="0 0 5 5"><path d="M1 .5l3 2-3 2z" fill="none" stroke="#999" stroke-width=".7"/></svg>
<svg class="a" style="left:26px;top:113.2px" width="7" height="7" viewBox="0 0 7 7"><rect x=".5" y=".5" width="6" height="6" fill="#e6e060" stroke="#6b6b20" stroke-width=".8"/><path d="M1.5 2.5h4M1.5 4.5h4" stroke="#6b6b20" stroke-width=".6"/></svg>
<div class="t" style="left:36.5px;top:112.7px;font-size:6.5px;color:#000;transform:scaleX(0.83);transform-origin:0 0;">edit_Kiel</div>
<svg class="a" style="left:19.5px;top:122.2px" width="5" height="5" viewBox="0 0 5 5"><path d="M1 .5l3 2-3 2z" fill="none" stroke="#999" stroke-width=".7"/></svg>
<svg class="a" style="left:26px;top:121.2px" width="7" height="7" viewBox="0 0 7 7"><rect x=".5" y=".5" width="6" height="6" fill="#e6e060" stroke="#6b6b20" stroke-width=".8"/><path d="M1.5 2.5h4M1.5 4.5h4" stroke="#6b6b20" stroke-width=".6"/></svg>
<div class="t" style="left:36.5px;top:120.7px;font-size:6.5px;color:#000;transform:scaleX(0.83);transform-origin:0 0;">edit_Planken</div>
<svg class="a" style="left:19.5px;top:130.2px" width="5" height="5" viewBox="0 0 5 5"><path d="M1 .5l3 2-3 2z" fill="none" stroke="#999" stroke-width=".7"/></svg>
<svg class="a" style="left:26px;top:129.2px" width="7" height="7" viewBox="0 0 7 7"><rect x=".5" y=".5" width="6" height="6" fill="#e6e060" stroke="#6b6b20" stroke-width=".8"/><path d="M1.5 2.5h4M1.5 4.5h4" stroke="#6b6b20" stroke-width=".6"/></svg>
<div class="t" style="left:36.5px;top:128.7px;font-size:6.5px;color:#000;transform:scaleX(0.83);transform-origin:0 0;">edit_Rumpl</div>
<svg class="a" style="left:19.5px;top:138.2px" width="5" height="5" viewBox="0 0 5 5"><path d="M1 .5l3 2-3 2z" fill="none" stroke="#999" stroke-width=".7"/></svg>
<svg class="a" style="left:26px;top:137.2px" width="7" height="7" viewBox="0 0 7 7"><rect x=".5" y=".5" width="6" height="6" fill="#e6e060" stroke="#6b6b20" stroke-width=".8"/><path d="M1.5 2.5h4M1.5 4.5h4" stroke="#6b6b20" stroke-width=".6"/></svg>
<div class="t" style="left:36.5px;top:136.7px;font-size:6.5px;color:#000;transform:scaleX(0.83);transform-origin:0 0;">Stahlplatte</div>
<svg class="a" style="left:19.5px;top:146.2px" width="5" height="5" viewBox="0 0 5 5"><path d="M1 .5l3 2-3 2z" fill="none" stroke="#999" stroke-width=".7"/></svg>
<svg class="a" style="left:26px;top:145.2px" width="7" height="7" viewBox="0 0 7 7"><rect x=".5" y=".5" width="6" height="6" fill="#e6e060" stroke="#6b6b20" stroke-width=".8"/><path d="M1.5 2.5h4M1.5 4.5h4" stroke="#6b6b20" stroke-width=".6"/></svg>
<div class="t" style="left:36.5px;top:144.7px;font-size:6.5px;color:#000;transform:scaleX(0.83);transform-origin:0 0;">view_Balkenwerk</div>
<svg class="a" style="left:19.5px;top:154.2px" width="5" height="5" viewBox="0 0 5 5"><path d="M1 .5l3 2-3 2z" fill="none" stroke="#999" stroke-width=".7"/></svg>
<svg class="a" style="left:26px;top:153.2px" width="7" height="7" viewBox="0 0 7 7"><rect x=".5" y=".5" width="6" height="6" fill="#e6e060" stroke="#6b6b20" stroke-width=".8"/><path d="M1.5 2.5h4M1.5 4.5h4" stroke="#6b6b20" stroke-width=".6"/></svg>
<div class="t" style="left:36.5px;top:152.7px;font-size:6.5px;color:#000;transform:scaleX(0.83);transform-origin:0 0;">view_Eisenspanten</div>
<svg class="a" style="left:19.5px;top:162.2px" width="5" height="5" viewBox="0 0 5 5"><path d="M1 .5l3 2-3 2z" fill="none" stroke="#999" stroke-width=".7"/></svg>
<svg class="a" style="left:26px;top:161.2px" width="7" height="7" viewBox="0 0 7 7"><rect x=".5" y=".5" width="6" height="6" fill="#e6e060" stroke="#6b6b20" stroke-width=".8"/><path d="M1.5 2.5h4M1.5 4.5h4" stroke="#6b6b20" stroke-width=".6"/></svg>
<div class="t" style="left:36.5px;top:160.7px;font-size:6.5px;color:#000;transform:scaleX(0.83);transform-origin:0 0;">view_grid</div>
<svg class="a" style="left:19.5px;top:170.2px" width="5" height="5" viewBox="0 0 5 5"><path d="M1 .5l3 2-3 2z" fill="none" stroke="#999" stroke-width=".7"/></svg>
<svg class="a" style="left:26px;top:169.2px" width="7" height="7" viewBox="0 0 7 7"><rect x=".5" y=".5" width="6" height="6" fill="#e6e060" stroke="#6b6b20" stroke-width=".8"/><path d="M1.5 2.5h4M1.5 4.5h4" stroke="#6b6b20" stroke-width=".6"/></svg>
<div class="t" style="left:36.5px;top:168.7px;font-size:6.5px;color:#000;transform:scaleX(0.83);transform-origin:0 0;">view_Linien</div>
<svg class="a" style="left:19.5px;top:178.2px" width="5" height="5" viewBox="0 0 5 5"><path d="M1 .5l3 2-3 2z" fill="none" stroke="#999" stroke-width=".7"/></svg>
<svg class="a" style="left:26px;top:177.2px" width="7" height="7" viewBox="0 0 7 7"><rect x=".5" y=".5" width="6" height="6" fill="#e6e060" stroke="#6b6b20" stroke-width=".8"/><path d="M1.5 2.5h4M1.5 4.5h4" stroke="#6b6b20" stroke-width=".6"/></svg>
<div class="t" style="left:36.5px;top:176.7px;font-size:6.5px;color:#000;transform:scaleX(0.83);transform-origin:0 0;">view_Nahtkurven_aussen</div>
<svg class="a" style="left:19.5px;top:186.2px" width="5" height="5" viewBox="0 0 5 5"><path d="M1 .5l3 2-3 2z" fill="none" stroke="#999" stroke-width=".7"/></svg>
<svg class="a" style="left:26px;top:185.2px" width="7" height="7" viewBox="0 0 7 7"><rect x=".5" y=".5" width="6" height="6" fill="#e6e060" stroke="#6b6b20" stroke-width=".8"/><path d="M1.5 2.5h4M1.5 4.5h4" stroke="#6b6b20" stroke-width=".6"/></svg>
<div class="t" style="left:36.5px;top:184.7px;font-size:6.5px;color:#000;transform:scaleX(0.83);transform-origin:0 0;">view_Nahtkurven_innen</div>
<svg class="a" style="left:19.5px;top:194.2px" width="5" height="5" viewBox="0 0 5 5"><path d="M1 .5l3 2-3 2z" fill="none" stroke="#999" stroke-width=".7"/></svg>
<svg class="a" style="left:26px;top:193.2px" width="7" height="7" viewBox="0 0 7 7"><rect x=".5" y=".5" width="6" height="6" fill="#e6e060" stroke="#6b6b20" stroke-width=".8"/><path d="M1.5 2.5h4M1.5 4.5h4" stroke="#6b6b20" stroke-width=".6"/></svg>
<div class="t" style="left:36.5px;top:192.7px;font-size:6.5px;color:#000;transform:scaleX(0.83);transform-origin:0 0;">view_Plankenrand</div>
<svg class="a" style="left:19.5px;top:202.2px" width="5" height="5" viewBox="0 0 5 5"><path d="M1 .5l3 2-3 2z" fill="none" stroke="#999" stroke-width=".7"/></svg>
<svg class="a" style="left:26px;top:201.2px" width="7" height="7" viewBox="0 0 7 7"><rect x=".5" y=".5" width="6" height="6" fill="#e6e060" stroke="#6b6b20" stroke-width=".8"/><path d="M1.5 2.5h4M1.5 4.5h4" stroke="#6b6b20" stroke-width=".6"/></svg>
<div class="t" style="left:36.5px;top:200.7px;font-size:6.5px;color:#000;transform:scaleX(0.83);transform-origin:0 0;">view_Spantleiste</div>
<svg class="a" style="left:19.5px;top:210.2px" width="5" height="5" viewBox="0 0 5 5"><path d="M1 .5l3 2-3 2z" fill="none" stroke="#999" stroke-width=".7"/></svg>
<svg class="a" style="left:26px;top:209.2px" width="7" height="7" viewBox="0 0 7 7"><rect x=".5" y=".5" width="6" height="6" fill="#e6e060" stroke="#6b6b20" stroke-width=".8"/><path d="M1.5 2.5h4M1.5 4.5h4" stroke="#6b6b20" stroke-width=".6"/></svg>
<div class="t" style="left:36.5px;top:208.7px;font-size:6.5px;color:#000;transform:scaleX(0.83);transform-origin:0 0;">view_Vermessung</div>
<div class="a" style="left:12px;top:81px;width:1px;height:5px;background:#c8c8c8;"></div>
<div class="a" style="left:12px;top:84.5px;width:4px;height:1px;background:#c8c8c8;"></div>
<div class="a" style="left:12px;top:96px;width:1px;height:124px;background:#d4d4d4;"></div>
<div class="a" style="left:21px;top:104px;width:1px;height:109px;background:#dcdcdc;"></div>
<svg class="a" style="left:10px;top:218px" width="5" height="5" viewBox="0 0 5 5"><path d="M4 1v3.5h-3.5z" fill="#222"/></svg>
<svg class="a" style="left:16.8px;top:216.8px" width="7" height="7" viewBox="0 0 7 7"><path d="M3.5 .3v6.4M.7 1.9l5.6 3.2M6.3 1.9l-5.6 3.2" stroke="#000" stroke-width="2.2" stroke-linecap="round"/><path d="M3.5 .9v5.2M1.2 2.2l4.6 2.6M5.8 2.2l-4.6 2.6" stroke="#f4f000" stroke-width="1.5"/><circle cx="3.5" cy="3.5" r="1.4" fill="#f4f000"/></svg>
<div class="t" style="left:27px;top:216.7px;font-size:6.5px;color:#111;transform:scaleX(0.86);transform-origin:0 0;">System</div>
<div class="a" style="left:21px;top:228.7px;width:4px;height:1px;background:#c8c8c8;"></div>
<svg class="a" style="left:26.6px;top:225.1px" width="7" height="7" viewBox="0 0 7 7"><path d="M3.5 .3v6.4M.7 1.9l5.6 3.2M6.3 1.9l-5.6 3.2" stroke="#000" stroke-width="2.2" stroke-linecap="round"/><path d="M3.5 .9v5.2M1.2 2.2l4.6 2.6M5.8 2.2l-4.6 2.6" stroke="#f4f000" stroke-width="1.5"/><circle cx="3.5" cy="3.5" r="1.4" fill="#f4f000"/></svg>
<div class="t" style="left:36.5px;top:224.7px;font-size:6.5px;color:#111;transform:scaleX(0.86);transform-origin:0 0;">*</div>
<div class="a" style="left:21px;top:236.7px;width:4px;height:1px;background:#c8c8c8;"></div>
<svg class="a" style="left:26.6px;top:233.1px" width="7" height="7" viewBox="0 0 7 7"><path d="M3.5 .3v6.4M.7 1.9l5.6 3.2M6.3 1.9l-5.6 3.2" stroke="#000" stroke-width="2.2" stroke-linecap="round"/><path d="M3.5 .9v5.2M1.2 2.2l4.6 2.6M5.8 2.2l-4.6 2.6" stroke="#f4f000" stroke-width="1.5"/><circle cx="3.5" cy="3.5" r="1.4" fill="#f4f000"/></svg>
<div class="t" style="left:36.5px;top:232.7px;font-size:6.5px;color:#111;transform:scaleX(0.86);transform-origin:0 0;">*0</div>
<div class="a" style="left:21px;top:224px;width:1px;height:13px;background:#c8c8c8;"></div>
<div class="a" style="left:2px;top:245px;width:100px;height:5.5px;background:linear-gradient(90deg,#c6d7ea,#d9e4f1);"></div>
<div class="t" style="left:3px;top:243.8px;font-size:6px;color:#303038;transform:scaleX(0.88);transform-origin:0 0;">Properties</div>
<svg class="a" style="left:104.5px;top:246px" width="4" height="4" viewBox="0 0 4 4"><path d="M.5 .5l3 3M3.5 .5l-3 3" stroke="#111" stroke-width="1"/></svg>
<div class="a" style="left:2px;top:251.5px;width:106px;height:1.2px;background:#6a6a6a;"></div>
<div class="a" style="left:2px;top:251.5px;width:1px;height:158px;background:#444;"></div>
<div class="a" style="left:0px;top:412px;width:111px;height:1px;background:#c4c4c4;"></div>
<div class="a" style="left:4px;top:253px;width:103px;height:7.5px;background:#ebebeb;border-bottom:1px solid #8a8a8a;"></div>
<div class="a" style="left:0px;top:243px;width:111px;height:1px;background:#c4c4c4;"></div>
<div class="a" style="left:100px;top:253px;width:7px;height:7.5px;background:#f6f6f6;border-left:1px solid #888;border-bottom:1px solid #222;"></div>
<div class="t" style="left:101.5px;top:252.5px;font-size:7px;color:#8a8a00;font-weight:bold;">?</div>
<div class="a" style="left:4px;top:261px;width:103px;height:1.5px;background:#fff;"></div>
<div class="a" style="left:2px;top:414.3px;width:100px;height:5.3px;background:linear-gradient(90deg,#c6d7ea,#d9e4f1);"></div>
<div class="t" style="left:3px;top:412.8px;font-size:6px;color:#303038;transform:scaleX(0.88);transform-origin:0 0;">Selection Set</div>
<svg class="a" style="left:104.5px;top:415px" width="4" height="4" viewBox="0 0 4 4"><path d="M.5 .5l3 3M3.5 .5l-3 3" stroke="#111" stroke-width="1"/></svg>
<div class="a" style="left:2px;top:420.5px;width:106px;height:1px;background:#8a8a8a;"></div>
<div class="a" style="left:2px;top:420.5px;width:1px;height:90.5px;background:#3a3a3a;"></div>
<div class="a" style="left:5.5px;top:436px;width:1px;height:67px;background:#a8b0c0;"></div>
<div class="a" style="left:6px;top:423.5px;width:9.5px;height:9px;background:linear-gradient(#fafafa,#dedede);border:1px solid #555;border-radius:1px;"></div>
<svg class="a" style="left:7.5px;top:425px" width="7" height="6" viewBox="0 0 7 6"><path d="M.5 .5h6v5h-6zM2.5 .5v5M4.5 .5v5" stroke="#333" stroke-width=".7" fill="none"/></svg>
<div class="a" style="left:18.6px;top:423.5px;width:8px;height:8.5px;background:#fbfbfb;border:1px solid #cfcfcf;"></div>
<div class="a" style="left:30.5px;top:423.5px;width:8px;height:8.5px;background:#fbfbfb;border:1px solid #cfcfcf;"></div>
<div class="a" style="left:42.4px;top:423.5px;width:8px;height:8.5px;background:#fbfbfb;border:1px solid #cfcfcf;"></div>
<div class="a" style="left:54.3px;top:423.5px;width:8px;height:8.5px;background:#fbfbfb;border:1px solid #cfcfcf;"></div>
<svg class="a" style="left:20px;top:424.5px" width="6" height="7" viewBox="0 0 6 7"><path d="M3 1v5.5M1 3l2-2 2 2" stroke="#111" stroke-width="1.2" fill="none"/></svg>
<svg class="a" style="left:32px;top:424.5px" width="6" height="7" viewBox="0 0 6 7"><path d="M3 .5v5.5M1 4l2 2 2-2" stroke="#111" stroke-width="1.2" fill="none"/></svg>
<svg class="a" style="left:43.5px;top:424.5px" width="7" height="7" viewBox="0 0 7 7"><path d="M.5 .5l6 6M6.5 .5l-6 6" stroke="#c03030" stroke-width=".8"/></svg>
<svg class="a" style="left:55.5px;top:424.5px" width="7" height="7" viewBox="0 0 7 7"><rect x=".5" y=".5" width="6" height="6" fill="#dde" stroke="#33a" stroke-width=".6"/><path d="M.5 .5l6 6M6.5 .5l-6 6" stroke="#c03030" stroke-width=".8"/></svg>
<div class="t" style="left:66.7px;top:424px;font-size:6.5px;color:#000;transform:scaleX(0.82);transform-origin:0 0;">0 Entities</div>
<div class="a" style="left:6px;top:435px;width:100.5px;height:71px;background:#fff;border:1px solid #b8b8b8;"></div>
<div class="a" style="left:7px;top:436px;width:99px;height:10px;background:linear-gradient(#fff,#f2f2f2);"></div>
<div class="t" style="left:9px;top:437px;font-size:6.5px;color:#000;transform:scaleX(0.84);transform-origin:0 0;">Name</div>
<div class="t" style="left:81px;top:437px;font-size:6.5px;color:#000;transform:scaleX(0.84);transform-origin:0 0;">Type</div>
<div class="a" style="left:7px;top:503.5px;width:99px;height:7px;background:#ededed;"></div>
<div class="a" style="left:12px;top:504px;width:75.5px;height:6px;background:linear-gradient(#f6f6f6,#d9d9d9);border:1px solid #9a9a9a;border-radius:2px;"></div>
<svg class="a" style="left:6px;top:505px" width="4" height="5" viewBox="0 0 4 5"><path d="M3 .5l-2 2 2 2z" fill="#222"/></svg>
<svg class="a" style="left:103px;top:505px" width="4" height="5" viewBox="0 0 4 5"><path d="M1 .5l2 2-2 2z" fill="#222"/></svg>
<div class="a" style="left:0px;top:511.5px;width:111px;height:2.5px;background:#f6f6f6;"></div>
<div class="a" style="left:111px;top:51px;width:589px;height:463px;background:#8080ff;"></div>
<div class="a" style="left:111px;top:51px;width:589px;height:1px;background:#8d8d6e;"></div>
<div class="a" style="left:111px;top:51px;width:1px;height:463px;background:#8d8d6e;"></div>
<div class="a" style="left:112px;top:512.5px;width:588px;height:1px;background:#3d3dd0;"></div>
<svg class="a" style="left:0;top:0" width="700" height="525" viewBox="0 0 700 525"><defs><clipPath id="vp"><rect x="112" y="52" width="588" height="461"/></clipPath></defs><g clip-path="url(#vp)"><path d="M112 218.3L700 227.3" stroke="#303060" stroke-width=".8" stroke-dasharray="1 3.4" fill="none"/><path d="M112 338.2L700 212" stroke="#303060" stroke-width=".8" stroke-dasharray="1 3.4" fill="none"/><path d="M632.5 60V513" stroke="#303060" stroke-width=".8" stroke-dasharray="1 3.4" fill="none"/><text x="631.5" y="59" font-family="Liberation Sans" font-weight="bold" font-size="7.6" fill="#000">Z</text><text x="111.5" y="225" font-family="Liberation Sans" font-weight="bold" font-size="7.6" fill="#000">Y</text><text x="111.8" y="345.3" font-family="Liberation Sans" font-weight="bold" font-size="7.6" fill="#000">X</text><path d="M146.0 226.0 C146.4 229.2 146.3 239.0 148.5 245.0 C150.7 251.0 154.6 257.6 159.0 262.0 C163.4 266.4 166.5 266.3 175.0 271.4 C183.5 276.5 197.5 285.4 210.0 292.5 C222.5 299.6 236.7 307.0 250.0 314.0 C263.3 321.0 276.7 327.6 290.0 334.5 C303.3 341.4 323.2 351.8 329.8 355.2 L333.0 368.0 L309.2 352.0 L250.0 320.5 L210.0 300.2 L175.0 277.5 L154.0 266.0 L145.5 249.0 L144.0 231.0z" fill="#8e8ea8"/><path d="M149.1 222.9 C149.0 224.5 148.2 229.4 148.3 232.5 C148.3 235.5 148.7 238.4 149.4 241.1 C150.1 243.9 151.0 246.5 152.2 248.9 C153.4 251.4 154.9 253.8 156.6 256.0 C158.2 258.2 160.1 260.4 162.2 262.4 C164.3 264.4 166.5 266.3 168.9 268.1 C171.3 269.9 173.8 271.6 176.5 273.3 C179.1 274.9 181.9 276.5 184.7 278.0 C187.5 279.5 190.4 281.0 193.3 282.4 C196.2 283.8 199.2 285.2 202.2 286.6 C205.1 287.9 208.1 289.3 211.0 290.6 C213.9 292.0 216.8 293.3 219.6 294.7 C222.4 296.0 225.2 297.4 227.8 298.8 C230.4 300.3 233.0 301.7 235.3 303.2 C237.7 304.7 240.9 307.1 242.0 307.9" stroke="#3a3a56" stroke-width="3.3" fill="none" transform="translate(-0.75,0.45)"/><path d="M149.1 222.9 C149.0 224.5 148.2 229.4 148.3 232.5 C148.3 235.5 148.7 238.4 149.4 241.1 C150.1 243.9 151.0 246.5 152.2 248.9 C153.4 251.4 154.9 253.8 156.6 256.0 C158.2 258.2 160.1 260.4 162.2 262.4 C164.3 264.4 166.5 266.3 168.9 268.1 C171.3 269.9 173.8 271.6 176.5 273.3 C179.1 274.9 181.9 276.5 184.7 278.0 C187.5 279.5 190.4 281.0 193.3 282.4 C196.2 283.8 199.2 285.2 202.2 286.6 C205.1 287.9 208.1 289.3 211.0 290.6 C213.9 292.0 216.8 293.3 219.6 294.7 C222.4 296.0 225.2 297.4 227.8 298.8 C230.4 300.3 233.0 301.7 235.3 303.2 C237.7 304.7 240.9 307.1 242.0 307.9" stroke="#a9a9da" stroke-width="3.0" fill="none"/><path d="M149.1 222.9 C149.0 224.5 148.2 229.4 148.3 232.5 C148.3 235.5 148.7 238.4 149.4 241.1 C150.1 243.9 151.0 246.5 152.2 248.9 C153.4 251.4 154.9 253.8 156.6 256.0 C158.2 258.2 160.1 260.4 162.2 262.4 C164.3 264.4 166.5 266.3 168.9 268.1 C171.3 269.9 173.8 271.6 176.5 273.3 C179.1 274.9 181.9 276.5 184.7 278.0 C187.5 279.5 190.4 281.0 193.3 282.4 C196.2 283.8 199.2 285.2 202.2 286.6 C205.1 287.9 208.1 289.3 211.0 290.6 C213.9 292.0 216.8 293.3 219.6 294.7 C222.4 296.0 225.2 297.4 227.8 298.8 C230.4 300.3 233.0 301.7 235.3 303.2 C237.7 304.7 240.9 307.1 242.0 307.9" stroke="#bcbcf0" stroke-width="1.3" fill="none" transform="translate(-0.5,0.3)"/><path d="M152.3 221.6 C152.2 223.3 151.5 228.4 151.6 231.6 C151.8 234.8 152.2 237.8 153.0 240.7 C153.7 243.6 154.8 246.3 156.0 249.0 C157.3 251.6 158.9 254.1 160.7 256.5 C162.4 258.9 164.4 261.1 166.6 263.3 C168.7 265.5 171.1 267.6 173.6 269.6 C176.1 271.6 178.7 273.5 181.5 275.3 C184.2 277.2 187.1 279.0 190.0 280.7 C193.0 282.4 196.0 284.0 199.0 285.6 C202.1 287.2 205.2 288.8 208.2 290.3 C211.3 291.8 214.4 293.3 217.5 294.8 C220.5 296.3 223.5 297.7 226.5 299.1 C229.4 300.6 232.3 302.0 235.0 303.4 C237.8 304.9 240.5 306.3 242.9 307.8 C245.4 309.2 248.8 311.5 250.0 312.2" stroke="#3a3a56" stroke-width="3.3" fill="none" transform="translate(-0.75,0.45)"/><path d="M152.3 221.6 C152.2 223.3 151.5 228.4 151.6 231.6 C151.8 234.8 152.2 237.8 153.0 240.7 C153.7 243.6 154.8 246.3 156.0 249.0 C157.3 251.6 158.9 254.1 160.7 256.5 C162.4 258.9 164.4 261.1 166.6 263.3 C168.7 265.5 171.1 267.6 173.6 269.6 C176.1 271.6 178.7 273.5 181.5 275.3 C184.2 277.2 187.1 279.0 190.0 280.7 C193.0 282.4 196.0 284.0 199.0 285.6 C202.1 287.2 205.2 288.8 208.2 290.3 C211.3 291.8 214.4 293.3 217.5 294.8 C220.5 296.3 223.5 297.7 226.5 299.1 C229.4 300.6 232.3 302.0 235.0 303.4 C237.8 304.9 240.5 306.3 242.9 307.8 C245.4 309.2 248.8 311.5 250.0 312.2" stroke="#a9a9da" stroke-width="3.0" fill="none"/><path d="M152.3 221.6 C152.2 223.3 151.5 228.4 151.6 231.6 C151.8 234.8 152.2 237.8 153.0 240.7 C153.7 243.6 154.8 246.3 156.0 249.0 C157.3 251.6 158.9 254.1 160.7 256.5 C162.4 258.9 164.4 261.1 166.6 263.3 C168.7 265.5 171.1 267.6 173.6 269.6 C176.1 271.6 178.7 273.5 181.5 275.3 C184.2 277.2 187.1 279.0 190.0 280.7 C193.0 282.4 196.0 284.0 199.0 285.6 C202.1 287.2 205.2 288.8 208.2 290.3 C211.3 291.8 214.4 293.3 217.5 294.8 C220.5 296.3 223.5 297.7 226.5 299.1 C229.4 300.6 232.3 302.0 235.0 303.4 C237.8 304.9 240.5 306.3 242.9 307.8 C245.4 309.2 248.8 311.5 250.0 312.2" stroke="#bcbcf0" stroke-width="1.3" fill="none" transform="translate(-0.5,0.3)"/><path d="M156.1 220.3 C156.0 222.1 155.4 227.4 155.5 230.7 C155.7 234.0 156.2 237.2 156.9 240.2 C157.7 243.2 158.8 246.1 160.1 248.9 C161.4 251.7 163.0 254.4 164.8 256.9 C166.6 259.5 168.6 261.9 170.8 264.3 C173.0 266.6 175.4 268.9 177.9 271.0 C180.5 273.2 183.2 275.3 186.0 277.3 C188.8 279.3 191.7 281.2 194.7 283.0 C197.7 284.9 200.8 286.7 203.9 288.4 C207.0 290.1 210.2 291.8 213.4 293.4 C216.5 295.1 219.7 296.6 222.9 298.2 C226.0 299.7 229.1 301.2 232.2 302.7 C235.2 304.2 238.2 305.7 241.1 307.1 C244.0 308.6 246.8 310.0 249.5 311.5 C252.1 312.9 255.7 315.1 257.0 315.8" stroke="#3a3a56" stroke-width="3.3" fill="none" transform="translate(-0.75,0.45)"/><path d="M156.1 220.3 C156.0 222.1 155.4 227.4 155.5 230.7 C155.7 234.0 156.2 237.2 156.9 240.2 C157.7 243.2 158.8 246.1 160.1 248.9 C161.4 251.7 163.0 254.4 164.8 256.9 C166.6 259.5 168.6 261.9 170.8 264.3 C173.0 266.6 175.4 268.9 177.9 271.0 C180.5 273.2 183.2 275.3 186.0 277.3 C188.8 279.3 191.7 281.2 194.7 283.0 C197.7 284.9 200.8 286.7 203.9 288.4 C207.0 290.1 210.2 291.8 213.4 293.4 C216.5 295.1 219.7 296.6 222.9 298.2 C226.0 299.7 229.1 301.2 232.2 302.7 C235.2 304.2 238.2 305.7 241.1 307.1 C244.0 308.6 246.8 310.0 249.5 311.5 C252.1 312.9 255.7 315.1 257.0 315.8" stroke="#a9a9da" stroke-width="3.0" fill="none"/><path d="M156.1 220.3 C156.0 222.1 155.4 227.4 155.5 230.7 C155.7 234.0 156.2 237.2 156.9 240.2 C157.7 243.2 158.8 246.1 160.1 248.9 C161.4 251.7 163.0 254.4 164.8 256.9 C166.6 259.5 168.6 261.9 170.8 264.3 C173.0 266.6 175.4 268.9 177.9 271.0 C180.5 273.2 183.2 275.3 186.0 277.3 C188.8 279.3 191.7 281.2 194.7 283.0 C197.7 284.9 200.8 286.7 203.9 288.4 C207.0 290.1 210.2 291.8 213.4 293.4 C216.5 295.1 219.7 296.6 222.9 298.2 C226.0 299.7 229.1 301.2 232.2 302.7 C235.2 304.2 238.2 305.7 241.1 307.1 C244.0 308.6 246.8 310.0 249.5 311.5 C252.1 312.9 255.7 315.1 257.0 315.8" stroke="#bcbcf0" stroke-width="1.3" fill="none" transform="translate(-0.5,0.3)"/><path d="M160.0 219.0 C159.9 220.8 159.3 226.4 159.5 229.8 C159.7 233.3 160.2 236.6 161.1 239.8 C161.9 243.0 163.0 246.1 164.4 249.0 C165.7 252.0 167.4 254.8 169.2 257.5 C171.1 260.3 173.2 262.9 175.4 265.4 C177.7 267.9 180.2 270.3 182.8 272.7 C185.4 275.0 188.1 277.2 191.0 279.4 C193.9 281.5 196.9 283.6 200.0 285.6 C203.1 287.6 206.3 289.5 209.5 291.4 C212.7 293.3 216.0 295.0 219.2 296.8 C222.5 298.5 225.8 300.2 229.1 301.9 C232.3 303.5 235.6 305.1 238.8 306.6 C242.0 308.2 245.1 309.7 248.2 311.2 C251.2 312.7 254.1 314.2 257.0 315.6 C259.8 317.1 263.7 319.2 265.0 319.9" stroke="#3a3a56" stroke-width="3.3" fill="none" transform="translate(-0.75,0.45)"/><path d="M160.0 219.0 C159.9 220.8 159.3 226.4 159.5 229.8 C159.7 233.3 160.2 236.6 161.1 239.8 C161.9 243.0 163.0 246.1 164.4 249.0 C165.7 252.0 167.4 254.8 169.2 257.5 C171.1 260.3 173.2 262.9 175.4 265.4 C177.7 267.9 180.2 270.3 182.8 272.7 C185.4 275.0 188.1 277.2 191.0 279.4 C193.9 281.5 196.9 283.6 200.0 285.6 C203.1 287.6 206.3 289.5 209.5 291.4 C212.7 293.3 216.0 295.0 219.2 296.8 C222.5 298.5 225.8 300.2 229.1 301.9 C232.3 303.5 235.6 305.1 238.8 306.6 C242.0 308.2 245.1 309.7 248.2 311.2 C251.2 312.7 254.1 314.2 257.0 315.6 C259.8 317.1 263.7 319.2 265.0 319.9" stroke="#a9a9da" stroke-width="3.0" fill="none"/><path d="M160.0 219.0 C159.9 220.8 159.3 226.4 159.5 229.8 C159.7 233.3 160.2 236.6 161.1 239.8 C161.9 243.0 163.0 246.1 164.4 249.0 C165.7 252.0 167.4 254.8 169.2 257.5 C171.1 260.3 173.2 262.9 175.4 265.4 C177.7 267.9 180.2 270.3 182.8 272.7 C185.4 275.0 188.1 277.2 191.0 279.4 C193.9 281.5 196.9 283.6 200.0 285.6 C203.1 287.6 206.3 289.5 209.5 291.4 C212.7 293.3 216.0 295.0 219.2 296.8 C222.5 298.5 225.8 300.2 229.1 301.9 C232.3 303.5 235.6 305.1 238.8 306.6 C242.0 308.2 245.1 309.7 248.2 311.2 C251.2 312.7 254.1 314.2 257.0 315.6 C259.8 317.1 263.7 319.2 265.0 319.9" stroke="#bcbcf0" stroke-width="1.3" fill="none" transform="translate(-0.5,0.3)"/><path d="M164.4 218.0 C164.4 219.9 164.0 225.5 164.2 229.1 C164.4 232.6 165.0 236.0 165.9 239.3 C166.7 242.7 167.9 245.9 169.3 248.9 C170.7 252.0 172.4 255.0 174.3 257.9 C176.1 260.8 178.3 263.5 180.5 266.2 C182.8 268.9 185.3 271.4 188.0 273.9 C190.6 276.4 193.4 278.8 196.3 281.1 C199.2 283.4 202.3 285.7 205.4 287.8 C208.5 289.9 211.7 292.0 214.9 294.0 C218.2 296.0 221.5 297.9 224.8 299.8 C228.2 301.6 231.5 303.4 234.8 305.2 C238.2 306.9 241.5 308.6 244.8 310.2 C248.0 311.8 251.3 313.4 254.4 314.9 C257.5 316.4 260.6 317.9 263.5 319.3 C266.5 320.7 270.6 322.8 272.0 323.5" stroke="#3a3a56" stroke-width="3.3" fill="none" transform="translate(-0.75,0.45)"/><path d="M164.4 218.0 C164.4 219.9 164.0 225.5 164.2 229.1 C164.4 232.6 165.0 236.0 165.9 239.3 C166.7 242.7 167.9 245.9 169.3 248.9 C170.7 252.0 172.4 255.0 174.3 257.9 C176.1 260.8 178.3 263.5 180.5 266.2 C182.8 268.9 185.3 271.4 188.0 273.9 C190.6 276.4 193.4 278.8 196.3 281.1 C199.2 283.4 202.3 285.7 205.4 287.8 C208.5 289.9 211.7 292.0 214.9 294.0 C218.2 296.0 221.5 297.9 224.8 299.8 C228.2 301.6 231.5 303.4 234.8 305.2 C238.2 306.9 241.5 308.6 244.8 310.2 C248.0 311.8 251.3 313.4 254.4 314.9 C257.5 316.4 260.6 317.9 263.5 319.3 C266.5 320.7 270.6 322.8 272.0 323.5" stroke="#a9a9da" stroke-width="3.0" fill="none"/><path d="M164.4 218.0 C164.4 219.9 164.0 225.5 164.2 229.1 C164.4 232.6 165.0 236.0 165.9 239.3 C166.7 242.7 167.9 245.9 169.3 248.9 C170.7 252.0 172.4 255.0 174.3 257.9 C176.1 260.8 178.3 263.5 180.5 266.2 C182.8 268.9 185.3 271.4 188.0 273.9 C190.6 276.4 193.4 278.8 196.3 281.1 C199.2 283.4 202.3 285.7 205.4 287.8 C208.5 289.9 211.7 292.0 214.9 294.0 C218.2 296.0 221.5 297.9 224.8 299.8 C228.2 301.6 231.5 303.4 234.8 305.2 C238.2 306.9 241.5 308.6 244.8 310.2 C248.0 311.8 251.3 313.4 254.4 314.9 C257.5 316.4 260.6 317.9 263.5 319.3 C266.5 320.7 270.6 322.8 272.0 323.5" stroke="#bcbcf0" stroke-width="1.3" fill="none" transform="translate(-0.5,0.3)"/><path d="M169.5 217.1 C169.5 219.0 169.1 224.8 169.4 228.5 C169.6 232.2 170.2 235.7 171.1 239.2 C172.0 242.6 173.2 245.9 174.6 249.1 C176.1 252.3 177.8 255.4 179.7 258.4 C181.6 261.5 183.8 264.4 186.1 267.2 C188.4 270.0 191.0 272.7 193.7 275.3 C196.4 277.9 199.2 280.4 202.2 282.9 C205.1 285.3 208.2 287.7 211.4 289.9 C214.6 292.2 217.9 294.4 221.2 296.5 C224.5 298.6 227.9 300.7 231.3 302.6 C234.7 304.6 238.2 306.5 241.6 308.3 C245.0 310.2 248.4 311.9 251.8 313.7 C255.1 315.4 258.5 317.0 261.7 318.6 C264.9 320.2 268.1 321.7 271.2 323.2 C274.2 324.7 278.5 326.8 280.0 327.6" stroke="#3a3a56" stroke-width="3.3" fill="none" transform="translate(-0.75,0.45)"/><path d="M169.5 217.1 C169.5 219.0 169.1 224.8 169.4 228.5 C169.6 232.2 170.2 235.7 171.1 239.2 C172.0 242.6 173.2 245.9 174.6 249.1 C176.1 252.3 177.8 255.4 179.7 258.4 C181.6 261.5 183.8 264.4 186.1 267.2 C188.4 270.0 191.0 272.7 193.7 275.3 C196.4 277.9 199.2 280.4 202.2 282.9 C205.1 285.3 208.2 287.7 211.4 289.9 C214.6 292.2 217.9 294.4 221.2 296.5 C224.5 298.6 227.9 300.7 231.3 302.6 C234.7 304.6 238.2 306.5 241.6 308.3 C245.0 310.2 248.4 311.9 251.8 313.7 C255.1 315.4 258.5 317.0 261.7 318.6 C264.9 320.2 268.1 321.7 271.2 323.2 C274.2 324.7 278.5 326.8 280.0 327.6" stroke="#a9a9da" stroke-width="3.0" fill="none"/><path d="M169.5 217.1 C169.5 219.0 169.1 224.8 169.4 228.5 C169.6 232.2 170.2 235.7 171.1 239.2 C172.0 242.6 173.2 245.9 174.6 249.1 C176.1 252.3 177.8 255.4 179.7 258.4 C181.6 261.5 183.8 264.4 186.1 267.2 C188.4 270.0 191.0 272.7 193.7 275.3 C196.4 277.9 199.2 280.4 202.2 282.9 C205.1 285.3 208.2 287.7 211.4 289.9 C214.6 292.2 217.9 294.4 221.2 296.5 C224.5 298.6 227.9 300.7 231.3 302.6 C234.7 304.6 238.2 306.5 241.6 308.3 C245.0 310.2 248.4 311.9 251.8 313.7 C255.1 315.4 258.5 317.0 261.7 318.6 C264.9 320.2 268.1 321.7 271.2 323.2 C274.2 324.7 278.5 326.8 280.0 327.6" stroke="#bcbcf0" stroke-width="1.3" fill="none" transform="translate(-0.5,0.3)"/><path d="M176.0 215.4 C176.0 217.5 175.6 223.6 175.9 227.5 C176.1 231.5 176.8 235.3 177.7 238.9 C178.6 242.6 179.8 246.2 181.3 249.6 C182.8 253.1 184.6 256.4 186.5 259.6 C188.5 262.9 190.8 266.0 193.2 269.0 C195.6 272.0 198.2 275.0 201.0 277.8 C203.8 280.6 206.7 283.3 209.8 286.0 C212.9 288.6 216.1 291.1 219.4 293.6 C222.7 296.0 226.1 298.4 229.6 300.7 C233.1 303.0 236.6 305.2 240.2 307.3 C243.8 309.4 247.4 311.4 251.0 313.4 C254.6 315.4 258.2 317.3 261.8 319.1 C265.3 320.9 268.9 322.6 272.3 324.3 C275.8 326.0 279.2 327.6 282.5 329.2 C285.7 330.8 290.4 333.0 292.0 333.7" stroke="#3a3a56" stroke-width="3.3" fill="none" transform="translate(-0.75,0.45)"/><path d="M176.0 215.4 C176.0 217.5 175.6 223.6 175.9 227.5 C176.1 231.5 176.8 235.3 177.7 238.9 C178.6 242.6 179.8 246.2 181.3 249.6 C182.8 253.1 184.6 256.4 186.5 259.6 C188.5 262.9 190.8 266.0 193.2 269.0 C195.6 272.0 198.2 275.0 201.0 277.8 C203.8 280.6 206.7 283.3 209.8 286.0 C212.9 288.6 216.1 291.1 219.4 293.6 C222.7 296.0 226.1 298.4 229.6 300.7 C233.1 303.0 236.6 305.2 240.2 307.3 C243.8 309.4 247.4 311.4 251.0 313.4 C254.6 315.4 258.2 317.3 261.8 319.1 C265.3 320.9 268.9 322.6 272.3 324.3 C275.8 326.0 279.2 327.6 282.5 329.2 C285.7 330.8 290.4 333.0 292.0 333.7" stroke="#a9a9da" stroke-width="3.0" fill="none"/><path d="M176.0 215.4 C176.0 217.5 175.6 223.6 175.9 227.5 C176.1 231.5 176.8 235.3 177.7 238.9 C178.6 242.6 179.8 246.2 181.3 249.6 C182.8 253.1 184.6 256.4 186.5 259.6 C188.5 262.9 190.8 266.0 193.2 269.0 C195.6 272.0 198.2 275.0 201.0 277.8 C203.8 280.6 206.7 283.3 209.8 286.0 C212.9 288.6 216.1 291.1 219.4 293.6 C222.7 296.0 226.1 298.4 229.6 300.7 C233.1 303.0 236.6 305.2 240.2 307.3 C243.8 309.4 247.4 311.4 251.0 313.4 C254.6 315.4 258.2 317.3 261.8 319.1 C265.3 320.9 268.9 322.6 272.3 324.3 C275.8 326.0 279.2 327.6 282.5 329.2 C285.7 330.8 290.4 333.0 292.0 333.7" stroke="#bcbcf0" stroke-width="1.3" fill="none" transform="translate(-0.5,0.3)"/><path d="M183.1 213.9 C183.0 216.1 182.5 222.8 182.8 227.0 C183.1 231.2 183.8 235.2 184.8 239.2 C185.8 243.1 187.1 246.9 188.7 250.6 C190.3 254.3 192.2 257.9 194.3 261.3 C196.4 264.8 198.9 268.1 201.5 271.3 C204.1 274.6 206.9 277.7 209.9 280.7 C212.9 283.7 216.1 286.6 219.4 289.4 C222.7 292.3 226.2 295.0 229.8 297.6 C233.3 300.2 237.1 302.8 240.8 305.2 C244.5 307.7 248.4 310.1 252.2 312.4 C256.1 314.7 260.0 316.9 263.9 319.1 C267.7 321.2 271.6 323.3 275.5 325.3 C279.3 327.4 283.1 329.3 286.8 331.2 C290.5 333.1 294.2 335.0 297.8 336.8 C301.3 338.6 306.3 341.2 308.0 342.1" stroke="#3a3a56" stroke-width="3.3" fill="none" transform="translate(-0.75,0.45)"/><path d="M183.1 213.9 C183.0 216.1 182.5 222.8 182.8 227.0 C183.1 231.2 183.8 235.2 184.8 239.2 C185.8 243.1 187.1 246.9 188.7 250.6 C190.3 254.3 192.2 257.9 194.3 261.3 C196.4 264.8 198.9 268.1 201.5 271.3 C204.1 274.6 206.9 277.7 209.9 280.7 C212.9 283.7 216.1 286.6 219.4 289.4 C222.7 292.3 226.2 295.0 229.8 297.6 C233.3 300.2 237.1 302.8 240.8 305.2 C244.5 307.7 248.4 310.1 252.2 312.4 C256.1 314.7 260.0 316.9 263.9 319.1 C267.7 321.2 271.6 323.3 275.5 325.3 C279.3 327.4 283.1 329.3 286.8 331.2 C290.5 333.1 294.2 335.0 297.8 336.8 C301.3 338.6 306.3 341.2 308.0 342.1" stroke="#a9a9da" stroke-width="3.0" fill="none"/><path d="M183.1 213.9 C183.0 216.1 182.5 222.8 182.8 227.0 C183.1 231.2 183.8 235.2 184.8 239.2 C185.8 243.1 187.1 246.9 188.7 250.6 C190.3 254.3 192.2 257.9 194.3 261.3 C196.4 264.8 198.9 268.1 201.5 271.3 C204.1 274.6 206.9 277.7 209.9 280.7 C212.9 283.7 216.1 286.6 219.4 289.4 C222.7 292.3 226.2 295.0 229.8 297.6 C233.3 300.2 237.1 302.8 240.8 305.2 C244.5 307.7 248.4 310.1 252.2 312.4 C256.1 314.7 260.0 316.9 263.9 319.1 C267.7 321.2 271.6 323.3 275.5 325.3 C279.3 327.4 283.1 329.3 286.8 331.2 C290.5 333.1 294.2 335.0 297.8 336.8 C301.3 338.6 306.3 341.2 308.0 342.1" stroke="#bcbcf0" stroke-width="1.3" fill="none" transform="translate(-0.5,0.3)"/><path d="M190.2 212.1 C190.1 214.1 189.5 220.2 189.7 224.1 C189.8 228.1 190.3 231.9 191.0 235.6 C191.7 239.4 192.8 243.0 194.1 246.5 C195.4 250.1 196.9 253.5 198.7 256.8 C200.4 260.2 202.4 263.4 204.6 266.6 C206.8 269.8 209.2 272.8 211.7 275.8 C214.3 278.8 217.0 281.7 219.9 284.5 C222.7 287.3 225.7 290.1 228.8 292.7 C231.9 295.4 235.2 297.9 238.5 300.4 C241.7 302.9 245.1 305.3 248.5 307.6 C252.0 310.0 255.4 312.2 258.9 314.4 C262.4 316.6 266.0 318.7 269.4 320.8 C272.9 322.8 276.5 324.8 279.9 326.7 C283.4 328.6 286.8 330.4 290.2 332.2 C293.5 334.0 298.4 336.5 300.0 337.3" stroke="#3a3a56" stroke-width="3.3" fill="none" transform="translate(-0.75,0.45)"/><path d="M190.2 212.1 C190.1 214.1 189.5 220.2 189.7 224.1 C189.8 228.1 190.3 231.9 191.0 235.6 C191.7 239.4 192.8 243.0 194.1 246.5 C195.4 250.1 196.9 253.5 198.7 256.8 C200.4 260.2 202.4 263.4 204.6 266.6 C206.8 269.8 209.2 272.8 211.7 275.8 C214.3 278.8 217.0 281.7 219.9 284.5 C222.7 287.3 225.7 290.1 228.8 292.7 C231.9 295.4 235.2 297.9 238.5 300.4 C241.7 302.9 245.1 305.3 248.5 307.6 C252.0 310.0 255.4 312.2 258.9 314.4 C262.4 316.6 266.0 318.7 269.4 320.8 C272.9 322.8 276.5 324.8 279.9 326.7 C283.4 328.6 286.8 330.4 290.2 332.2 C293.5 334.0 298.4 336.5 300.0 337.3" stroke="#a9a9da" stroke-width="3.0" fill="none"/><path d="M190.2 212.1 C190.1 214.1 189.5 220.2 189.7 224.1 C189.8 228.1 190.3 231.9 191.0 235.6 C191.7 239.4 192.8 243.0 194.1 246.5 C195.4 250.1 196.9 253.5 198.7 256.8 C200.4 260.2 202.4 263.4 204.6 266.6 C206.8 269.8 209.2 272.8 211.7 275.8 C214.3 278.8 217.0 281.7 219.9 284.5 C222.7 287.3 225.7 290.1 228.8 292.7 C231.9 295.4 235.2 297.9 238.5 300.4 C241.7 302.9 245.1 305.3 248.5 307.6 C252.0 310.0 255.4 312.2 258.9 314.4 C262.4 316.6 266.0 318.7 269.4 320.8 C272.9 322.8 276.5 324.8 279.9 326.7 C283.4 328.6 286.8 330.4 290.2 332.2 C293.5 334.0 298.4 336.5 300.0 337.3" stroke="#bcbcf0" stroke-width="1.3" fill="none" transform="translate(-0.5,0.3)"/><path d="M198.6 210.0 C198.5 212.1 197.7 218.6 197.8 222.6 C197.8 226.7 198.2 230.7 198.9 234.5 C199.6 238.4 200.6 242.1 201.8 245.8 C203.0 249.4 204.6 252.9 206.3 256.4 C208.0 259.8 210.0 263.1 212.2 266.4 C214.4 269.6 216.8 272.8 219.3 275.8 C221.9 278.9 224.6 281.8 227.5 284.7 C230.4 287.6 233.4 290.4 236.6 293.2 C239.7 295.9 243.0 298.6 246.3 301.1 C249.6 303.7 253.1 306.2 256.6 308.7 C260.0 311.2 263.6 313.5 267.1 315.9 C270.7 318.2 274.3 320.5 277.8 322.7 C281.4 324.9 285.0 327.1 288.5 329.2 C292.0 331.3 295.5 333.4 299.0 335.4 C302.4 337.4 307.3 340.4 309.0 341.3" stroke="#3a3a56" stroke-width="3.3" fill="none" transform="translate(-0.75,0.45)"/><path d="M198.6 210.0 C198.5 212.1 197.7 218.6 197.8 222.6 C197.8 226.7 198.2 230.7 198.9 234.5 C199.6 238.4 200.6 242.1 201.8 245.8 C203.0 249.4 204.6 252.9 206.3 256.4 C208.0 259.8 210.0 263.1 212.2 266.4 C214.4 269.6 216.8 272.8 219.3 275.8 C221.9 278.9 224.6 281.8 227.5 284.7 C230.4 287.6 233.4 290.4 236.6 293.2 C239.7 295.9 243.0 298.6 246.3 301.1 C249.6 303.7 253.1 306.2 256.6 308.7 C260.0 311.2 263.6 313.5 267.1 315.9 C270.7 318.2 274.3 320.5 277.8 322.7 C281.4 324.9 285.0 327.1 288.5 329.2 C292.0 331.3 295.5 333.4 299.0 335.4 C302.4 337.4 307.3 340.4 309.0 341.3" stroke="#a9a9da" stroke-width="3.0" fill="none"/><path d="M198.6 210.0 C198.5 212.1 197.7 218.6 197.8 222.6 C197.8 226.7 198.2 230.7 198.9 234.5 C199.6 238.4 200.6 242.1 201.8 245.8 C203.0 249.4 204.6 252.9 206.3 256.4 C208.0 259.8 210.0 263.1 212.2 266.4 C214.4 269.6 216.8 272.8 219.3 275.8 C221.9 278.9 224.6 281.8 227.5 284.7 C230.4 287.6 233.4 290.4 236.6 293.2 C239.7 295.9 243.0 298.6 246.3 301.1 C249.6 303.7 253.1 306.2 256.6 308.7 C260.0 311.2 263.6 313.5 267.1 315.9 C270.7 318.2 274.3 320.5 277.8 322.7 C281.4 324.9 285.0 327.1 288.5 329.2 C292.0 331.3 295.5 333.4 299.0 335.4 C302.4 337.4 307.3 340.4 309.0 341.3" stroke="#bcbcf0" stroke-width="1.3" fill="none" transform="translate(-0.5,0.3)"/><path d="M207.6 208.1 C207.5 210.3 206.7 217.1 206.7 221.3 C206.8 225.6 207.2 229.7 207.9 233.8 C208.6 237.8 209.7 241.7 211.0 245.5 C212.3 249.3 214.0 252.9 215.9 256.5 C217.7 260.1 219.9 263.5 222.2 266.9 C224.5 270.3 227.1 273.5 229.8 276.7 C232.5 279.9 235.5 283.0 238.5 286.0 C241.6 289.0 244.8 291.9 248.1 294.8 C251.4 297.7 254.8 300.5 258.3 303.2 C261.8 305.9 265.4 308.6 269.0 311.2 C272.6 313.9 276.3 316.4 280.0 318.9 C283.6 321.4 287.3 323.9 291.0 326.4 C294.6 328.8 298.2 331.2 301.8 333.6 C305.3 335.9 308.8 338.3 312.2 340.6 C315.5 342.9 320.4 346.3 322.0 347.5" stroke="#3a3a56" stroke-width="3.3" fill="none" transform="translate(-0.75,0.45)"/><path d="M207.6 208.1 C207.5 210.3 206.7 217.1 206.7 221.3 C206.8 225.6 207.2 229.7 207.9 233.8 C208.6 237.8 209.7 241.7 211.0 245.5 C212.3 249.3 214.0 252.9 215.9 256.5 C217.7 260.1 219.9 263.5 222.2 266.9 C224.5 270.3 227.1 273.5 229.8 276.7 C232.5 279.9 235.5 283.0 238.5 286.0 C241.6 289.0 244.8 291.9 248.1 294.8 C251.4 297.7 254.8 300.5 258.3 303.2 C261.8 305.9 265.4 308.6 269.0 311.2 C272.6 313.9 276.3 316.4 280.0 318.9 C283.6 321.4 287.3 323.9 291.0 326.4 C294.6 328.8 298.2 331.2 301.8 333.6 C305.3 335.9 308.8 338.3 312.2 340.6 C315.5 342.9 320.4 346.3 322.0 347.5" stroke="#a9a9da" stroke-width="3.0" fill="none"/><path d="M207.6 208.1 C207.5 210.3 206.7 217.1 206.7 221.3 C206.8 225.6 207.2 229.7 207.9 233.8 C208.6 237.8 209.7 241.7 211.0 245.5 C212.3 249.3 214.0 252.9 215.9 256.5 C217.7 260.1 219.9 263.5 222.2 266.9 C224.5 270.3 227.1 273.5 229.8 276.7 C232.5 279.9 235.5 283.0 238.5 286.0 C241.6 289.0 244.8 291.9 248.1 294.8 C251.4 297.7 254.8 300.5 258.3 303.2 C261.8 305.9 265.4 308.6 269.0 311.2 C272.6 313.9 276.3 316.4 280.0 318.9 C283.6 321.4 287.3 323.9 291.0 326.4 C294.6 328.8 298.2 331.2 301.8 333.6 C305.3 335.9 308.8 338.3 312.2 340.6 C315.5 342.9 320.4 346.3 322.0 347.5" stroke="#bcbcf0" stroke-width="1.3" fill="none" transform="translate(-0.5,0.3)"/><path d="M216.5 206.2 C216.4 208.5 215.6 215.4 215.5 219.8 C215.5 224.2 215.9 228.4 216.5 232.5 C217.1 236.6 218.1 240.6 219.3 244.5 C220.6 248.3 222.1 252.1 223.9 255.7 C225.7 259.3 227.9 262.7 230.2 266.1 C232.6 269.4 235.2 272.7 238.0 275.8 C240.9 279.0 244.0 282.0 247.2 284.9 C250.4 287.9 253.8 290.8 257.3 293.6 C260.8 296.4 264.4 299.2 268.1 301.9 C271.7 304.7 275.4 307.4 279.1 310.1 C282.8 312.8 286.6 315.5 290.2 318.2 C293.9 320.9 297.5 323.6 301.0 326.4 C304.5 329.2 307.9 332.0 311.1 334.9 C314.3 337.7 317.4 340.6 320.2 343.7 C323.0 346.7 326.7 351.4 328.0 353.0" stroke="#3a3a56" stroke-width="3.3" fill="none" transform="translate(-0.75,0.45)"/><path d="M216.5 206.2 C216.4 208.5 215.6 215.4 215.5 219.8 C215.5 224.2 215.9 228.4 216.5 232.5 C217.1 236.6 218.1 240.6 219.3 244.5 C220.6 248.3 222.1 252.1 223.9 255.7 C225.7 259.3 227.9 262.7 230.2 266.1 C232.6 269.4 235.2 272.7 238.0 275.8 C240.9 279.0 244.0 282.0 247.2 284.9 C250.4 287.9 253.8 290.8 257.3 293.6 C260.8 296.4 264.4 299.2 268.1 301.9 C271.7 304.7 275.4 307.4 279.1 310.1 C282.8 312.8 286.6 315.5 290.2 318.2 C293.9 320.9 297.5 323.6 301.0 326.4 C304.5 329.2 307.9 332.0 311.1 334.9 C314.3 337.7 317.4 340.6 320.2 343.7 C323.0 346.7 326.7 351.4 328.0 353.0" stroke="#a9a9da" stroke-width="3.0" fill="none"/><path d="M216.5 206.2 C216.4 208.5 215.6 215.4 215.5 219.8 C215.5 224.2 215.9 228.4 216.5 232.5 C217.1 236.6 218.1 240.6 219.3 244.5 C220.6 248.3 222.1 252.1 223.9 255.7 C225.7 259.3 227.9 262.7 230.2 266.1 C232.6 269.4 235.2 272.7 238.0 275.8 C240.9 279.0 244.0 282.0 247.2 284.9 C250.4 287.9 253.8 290.8 257.3 293.6 C260.8 296.4 264.4 299.2 268.1 301.9 C271.7 304.7 275.4 307.4 279.1 310.1 C282.8 312.8 286.6 315.5 290.2 318.2 C293.9 320.9 297.5 323.6 301.0 326.4 C304.5 329.2 307.9 332.0 311.1 334.9 C314.3 337.7 317.4 340.6 320.2 343.7 C323.0 346.7 326.7 351.4 328.0 353.0" stroke="#bcbcf0" stroke-width="1.3" fill="none" transform="translate(-0.5,0.3)"/><path d="M226.3 204.3 C226.1 206.8 225.1 214.4 225.1 219.3 C225.2 224.1 225.7 228.8 226.6 233.3 C227.5 237.8 228.8 242.2 230.4 246.4 C232.0 250.6 234.0 254.7 236.3 258.6 C238.5 262.5 241.1 266.2 243.9 269.8 C246.7 273.4 249.8 276.9 253.0 280.2 C256.3 283.6 259.7 286.8 263.3 290.0 C266.8 293.2 270.6 296.2 274.4 299.3 C278.1 302.3 282.1 305.3 286.0 308.3 C289.8 311.3 293.8 314.2 297.7 317.2 C301.6 320.2 305.5 323.2 309.3 326.3 C313.1 329.4 316.9 332.5 320.5 335.7 C324.1 339.0 327.6 342.2 330.9 345.7 C334.2 349.1 337.3 352.7 340.2 356.4 C343.0 360.1 346.7 366.1 348.0 368.0" stroke="#3a3a56" stroke-width="3.3" fill="none" transform="translate(-0.75,0.45)"/><path d="M226.3 204.3 C226.1 206.8 225.1 214.4 225.1 219.3 C225.2 224.1 225.7 228.8 226.6 233.3 C227.5 237.8 228.8 242.2 230.4 246.4 C232.0 250.6 234.0 254.7 236.3 258.6 C238.5 262.5 241.1 266.2 243.9 269.8 C246.7 273.4 249.8 276.9 253.0 280.2 C256.3 283.6 259.7 286.8 263.3 290.0 C266.8 293.2 270.6 296.2 274.4 299.3 C278.1 302.3 282.1 305.3 286.0 308.3 C289.8 311.3 293.8 314.2 297.7 317.2 C301.6 320.2 305.5 323.2 309.3 326.3 C313.1 329.4 316.9 332.5 320.5 335.7 C324.1 339.0 327.6 342.2 330.9 345.7 C334.2 349.1 337.3 352.7 340.2 356.4 C343.0 360.1 346.7 366.1 348.0 368.0" stroke="#a9a9da" stroke-width="3.0" fill="none"/><path d="M226.3 204.3 C226.1 206.8 225.1 214.4 225.1 219.3 C225.2 224.1 225.7 228.8 226.6 233.3 C227.5 237.8 228.8 242.2 230.4 246.4 C232.0 250.6 234.0 254.7 236.3 258.6 C238.5 262.5 241.1 266.2 243.9 269.8 C246.7 273.4 249.8 276.9 253.0 280.2 C256.3 283.6 259.7 286.8 263.3 290.0 C266.8 293.2 270.6 296.2 274.4 299.3 C278.1 302.3 282.1 305.3 286.0 308.3 C289.8 311.3 293.8 314.2 297.7 317.2 C301.6 320.2 305.5 323.2 309.3 326.3 C313.1 329.4 316.9 332.5 320.5 335.7 C324.1 339.0 327.6 342.2 330.9 345.7 C334.2 349.1 337.3 352.7 340.2 356.4 C343.0 360.1 346.7 366.1 348.0 368.0" stroke="#bcbcf0" stroke-width="1.3" fill="none" transform="translate(-0.5,0.3)"/><path d="M334.6 350.0 C335.6 351.1 337.9 353.4 340.2 356.4 C342.4 359.4 346.7 366.1 348.0 368.0" stroke="#4aae88" stroke-width="3.2" fill="none"/><path d="M238.1 202.4 C237.9 205.1 236.9 213.3 237.0 218.5 C237.1 223.7 237.5 228.7 238.4 233.6 C239.2 238.4 240.5 243.1 242.1 247.6 C243.8 252.1 245.8 256.5 248.1 260.7 C250.4 264.8 253.1 268.9 256.0 272.7 C259.0 276.6 262.3 280.3 265.8 283.9 C269.3 287.4 273.2 290.8 277.2 294.1 C281.1 297.4 285.4 300.5 289.8 303.7 C294.1 306.8 298.6 309.8 303.0 312.9 C307.5 315.9 312.0 318.9 316.4 322.1 C320.8 325.2 325.2 328.3 329.3 331.6 C333.5 334.9 337.5 338.2 341.2 341.8 C344.9 345.4 348.4 349.1 351.5 353.0 C354.6 357.0 357.4 361.2 359.6 365.7 C361.9 370.1 364.1 377.6 365.0 380.0" stroke="#3a3a56" stroke-width="3.3" fill="none" transform="translate(-0.75,0.45)"/><path d="M238.1 202.4 C237.9 205.1 236.9 213.3 237.0 218.5 C237.1 223.7 237.5 228.7 238.4 233.6 C239.2 238.4 240.5 243.1 242.1 247.6 C243.8 252.1 245.8 256.5 248.1 260.7 C250.4 264.8 253.1 268.9 256.0 272.7 C259.0 276.6 262.3 280.3 265.8 283.9 C269.3 287.4 273.2 290.8 277.2 294.1 C281.1 297.4 285.4 300.5 289.8 303.7 C294.1 306.8 298.6 309.8 303.0 312.9 C307.5 315.9 312.0 318.9 316.4 322.1 C320.8 325.2 325.2 328.3 329.3 331.6 C333.5 334.9 337.5 338.2 341.2 341.8 C344.9 345.4 348.4 349.1 351.5 353.0 C354.6 357.0 357.4 361.2 359.6 365.7 C361.9 370.1 364.1 377.6 365.0 380.0" stroke="#a9a9da" stroke-width="3.0" fill="none"/><path d="M238.1 202.4 C237.9 205.1 236.9 213.3 237.0 218.5 C237.1 223.7 237.5 228.7 238.4 233.6 C239.2 238.4 240.5 243.1 242.1 247.6 C243.8 252.1 245.8 256.5 248.1 260.7 C250.4 264.8 253.1 268.9 256.0 272.7 C259.0 276.6 262.3 280.3 265.8 283.9 C269.3 287.4 273.2 290.8 277.2 294.1 C281.1 297.4 285.4 300.5 289.8 303.7 C294.1 306.8 298.6 309.8 303.0 312.9 C307.5 315.9 312.0 318.9 316.4 322.1 C320.8 325.2 325.2 328.3 329.3 331.6 C333.5 334.9 337.5 338.2 341.2 341.8 C344.9 345.4 348.4 349.1 351.5 353.0 C354.6 357.0 357.4 361.2 359.6 365.7 C361.9 370.1 364.1 377.6 365.0 380.0" stroke="#bcbcf0" stroke-width="1.3" fill="none" transform="translate(-0.5,0.3)"/><path d="M344.1 345.0 C345.4 346.3 348.9 349.6 351.5 353.0 C354.1 356.5 357.4 361.2 359.6 365.7 C361.9 370.1 364.1 377.6 365.0 380.0" stroke="#4aae88" stroke-width="3.2" fill="none"/><path d="M251.0 199.4 C250.9 202.2 249.9 210.8 249.9 216.3 C249.9 221.8 250.2 227.2 250.9 232.4 C251.6 237.7 252.7 242.8 254.1 247.7 C255.5 252.6 257.3 257.4 259.5 261.9 C261.7 266.5 264.2 270.9 267.1 275.0 C270.1 279.2 273.4 283.1 277.1 286.8 C280.7 290.5 284.9 293.9 289.2 297.2 C293.5 300.6 298.2 303.6 302.9 306.7 C307.6 309.8 312.6 312.7 317.5 315.7 C322.3 318.7 327.3 321.6 332.1 324.7 C336.8 327.8 341.5 330.9 345.9 334.2 C350.2 337.6 354.5 341.0 358.2 344.8 C361.9 348.6 365.4 352.6 368.2 357.0 C371.0 361.4 373.4 366.0 375.0 371.2 C376.7 376.4 377.5 385.2 378.0 388.0" stroke="#3a3a56" stroke-width="3.3" fill="none" transform="translate(-0.75,0.45)"/><path d="M251.0 199.4 C250.9 202.2 249.9 210.8 249.9 216.3 C249.9 221.8 250.2 227.2 250.9 232.4 C251.6 237.7 252.7 242.8 254.1 247.7 C255.5 252.6 257.3 257.4 259.5 261.9 C261.7 266.5 264.2 270.9 267.1 275.0 C270.1 279.2 273.4 283.1 277.1 286.8 C280.7 290.5 284.9 293.9 289.2 297.2 C293.5 300.6 298.2 303.6 302.9 306.7 C307.6 309.8 312.6 312.7 317.5 315.7 C322.3 318.7 327.3 321.6 332.1 324.7 C336.8 327.8 341.5 330.9 345.9 334.2 C350.2 337.6 354.5 341.0 358.2 344.8 C361.9 348.6 365.4 352.6 368.2 357.0 C371.0 361.4 373.4 366.0 375.0 371.2 C376.7 376.4 377.5 385.2 378.0 388.0" stroke="#a9a9da" stroke-width="3.0" fill="none"/><path d="M251.0 199.4 C250.9 202.2 249.9 210.8 249.9 216.3 C249.9 221.8 250.2 227.2 250.9 232.4 C251.6 237.7 252.7 242.8 254.1 247.7 C255.5 252.6 257.3 257.4 259.5 261.9 C261.7 266.5 264.2 270.9 267.1 275.0 C270.1 279.2 273.4 283.1 277.1 286.8 C280.7 290.5 284.9 293.9 289.2 297.2 C293.5 300.6 298.2 303.6 302.9 306.7 C307.6 309.8 312.6 312.7 317.5 315.7 C322.3 318.7 327.3 321.6 332.1 324.7 C336.8 327.8 341.5 330.9 345.9 334.2 C350.2 337.6 354.5 341.0 358.2 344.8 C361.9 348.6 365.4 352.6 368.2 357.0 C371.0 361.4 373.4 366.0 375.0 371.2 C376.7 376.4 377.5 385.2 378.0 388.0" stroke="#bcbcf0" stroke-width="1.3" fill="none" transform="translate(-0.5,0.3)"/><path d="M354.9 342.0 C355.5 342.5 356.0 342.3 358.2 344.8 C360.4 347.3 365.4 352.6 368.2 357.0 C371.0 361.4 373.4 366.0 375.0 371.2 C376.7 376.4 377.5 385.2 378.0 388.0" stroke="#4aae88" stroke-width="3.2" fill="none"/><path d="M264.1 196.9 C263.9 199.8 262.7 208.7 262.7 214.4 C262.6 220.1 263.1 225.7 264.0 231.2 C264.9 236.7 266.2 242.1 267.9 247.3 C269.6 252.4 271.8 257.5 274.3 262.3 C276.9 267.1 279.8 271.7 283.1 276.0 C286.4 280.4 290.1 284.5 294.0 288.4 C298.0 292.2 302.4 295.7 306.9 299.2 C311.4 302.6 316.2 305.7 321.0 308.9 C325.8 312.1 330.8 315.0 335.7 318.1 C340.5 321.2 345.4 324.3 350.1 327.5 C354.7 330.7 359.3 334.0 363.5 337.5 C367.7 341.1 371.7 344.7 375.1 348.8 C378.6 352.9 381.8 357.1 384.3 361.9 C386.8 366.7 388.9 371.8 390.2 377.5 C391.4 383.1 391.7 392.9 392.0 396.0" stroke="#3a3a56" stroke-width="3.3" fill="none" transform="translate(-0.75,0.45)"/><path d="M264.1 196.9 C263.9 199.8 262.7 208.7 262.7 214.4 C262.6 220.1 263.1 225.7 264.0 231.2 C264.9 236.7 266.2 242.1 267.9 247.3 C269.6 252.4 271.8 257.5 274.3 262.3 C276.9 267.1 279.8 271.7 283.1 276.0 C286.4 280.4 290.1 284.5 294.0 288.4 C298.0 292.2 302.4 295.7 306.9 299.2 C311.4 302.6 316.2 305.7 321.0 308.9 C325.8 312.1 330.8 315.0 335.7 318.1 C340.5 321.2 345.4 324.3 350.1 327.5 C354.7 330.7 359.3 334.0 363.5 337.5 C367.7 341.1 371.7 344.7 375.1 348.8 C378.6 352.9 381.8 357.1 384.3 361.9 C386.8 366.7 388.9 371.8 390.2 377.5 C391.4 383.1 391.7 392.9 392.0 396.0" stroke="#a9a9da" stroke-width="3.0" fill="none"/><path d="M264.1 196.9 C263.9 199.8 262.7 208.7 262.7 214.4 C262.6 220.1 263.1 225.7 264.0 231.2 C264.9 236.7 266.2 242.1 267.9 247.3 C269.6 252.4 271.8 257.5 274.3 262.3 C276.9 267.1 279.8 271.7 283.1 276.0 C286.4 280.4 290.1 284.5 294.0 288.4 C298.0 292.2 302.4 295.7 306.9 299.2 C311.4 302.6 316.2 305.7 321.0 308.9 C325.8 312.1 330.8 315.0 335.7 318.1 C340.5 321.2 345.4 324.3 350.1 327.5 C354.7 330.7 359.3 334.0 363.5 337.5 C367.7 341.1 371.7 344.7 375.1 348.8 C378.6 352.9 381.8 357.1 384.3 361.9 C386.8 366.7 388.9 371.8 390.2 377.5 C391.4 383.1 391.7 392.9 392.0 396.0" stroke="#bcbcf0" stroke-width="1.3" fill="none" transform="translate(-0.5,0.3)"/><path d="M362.8 337.0 C362.9 337.1 361.4 335.5 363.5 337.5 C365.5 339.5 371.7 344.7 375.1 348.8 C378.6 352.9 381.8 357.1 384.3 361.9 C386.8 366.7 388.9 371.8 390.2 377.5 C391.4 383.1 391.7 392.9 392.0 396.0" stroke="#4aae88" stroke-width="3.2" fill="none"/><path d="M278.1 194.4 C277.9 197.4 276.6 206.6 276.6 212.6 C276.7 218.5 277.2 224.3 278.2 230.0 C279.3 235.6 280.8 241.2 282.7 246.5 C284.6 251.8 287.0 257.0 289.8 261.9 C292.6 266.9 295.8 271.6 299.3 276.1 C302.9 280.6 306.8 284.8 311.1 288.8 C315.3 292.8 320.0 296.4 324.7 300.0 C329.4 303.5 334.5 306.8 339.5 310.1 C344.5 313.4 349.7 316.6 354.6 319.8 C359.6 323.1 364.7 326.3 369.3 329.7 C374.0 333.2 378.7 336.6 382.8 340.4 C386.9 344.2 390.9 348.1 394.2 352.5 C397.5 356.8 400.5 361.4 402.7 366.5 C405.0 371.7 406.7 377.1 407.6 383.2 C408.5 389.3 407.9 399.7 408.0 403.0" stroke="#3a3a56" stroke-width="3.3" fill="none" transform="translate(-0.75,0.45)"/><path d="M278.1 194.4 C277.9 197.4 276.6 206.6 276.6 212.6 C276.7 218.5 277.2 224.3 278.2 230.0 C279.3 235.6 280.8 241.2 282.7 246.5 C284.6 251.8 287.0 257.0 289.8 261.9 C292.6 266.9 295.8 271.6 299.3 276.1 C302.9 280.6 306.8 284.8 311.1 288.8 C315.3 292.8 320.0 296.4 324.7 300.0 C329.4 303.5 334.5 306.8 339.5 310.1 C344.5 313.4 349.7 316.6 354.6 319.8 C359.6 323.1 364.7 326.3 369.3 329.7 C374.0 333.2 378.7 336.6 382.8 340.4 C386.9 344.2 390.9 348.1 394.2 352.5 C397.5 356.8 400.5 361.4 402.7 366.5 C405.0 371.7 406.7 377.1 407.6 383.2 C408.5 389.3 407.9 399.7 408.0 403.0" stroke="#a9a9da" stroke-width="3.0" fill="none"/><path d="M278.1 194.4 C277.9 197.4 276.6 206.6 276.6 212.6 C276.7 218.5 277.2 224.3 278.2 230.0 C279.3 235.6 280.8 241.2 282.7 246.5 C284.6 251.8 287.0 257.0 289.8 261.9 C292.6 266.9 295.8 271.6 299.3 276.1 C302.9 280.6 306.8 284.8 311.1 288.8 C315.3 292.8 320.0 296.4 324.7 300.0 C329.4 303.5 334.5 306.8 339.5 310.1 C344.5 313.4 349.7 316.6 354.6 319.8 C359.6 323.1 364.7 326.3 369.3 329.7 C374.0 333.2 378.7 336.6 382.8 340.4 C386.9 344.2 390.9 348.1 394.2 352.5 C397.5 356.8 400.5 361.4 402.7 366.5 C405.0 371.7 406.7 377.1 407.6 383.2 C408.5 389.3 407.9 399.7 408.0 403.0" stroke="#bcbcf0" stroke-width="1.3" fill="none" transform="translate(-0.5,0.3)"/><path d="M373.5 333.0 C375.0 334.2 379.3 337.2 382.8 340.4 C386.3 343.7 390.9 348.1 394.2 352.5 C397.5 356.8 400.5 361.4 402.7 366.5 C405.0 371.7 406.7 377.1 407.6 383.2 C408.5 389.3 407.9 399.7 408.0 403.0" stroke="#4aae88" stroke-width="3.2" fill="none"/><path d="M292.1 191.4 C291.9 194.6 290.8 204.1 290.9 210.2 C291.0 216.3 291.7 222.3 292.8 228.1 C294.0 233.9 295.6 239.6 297.7 245.1 C299.8 250.5 302.4 255.8 305.3 260.8 C308.3 265.9 311.8 270.7 315.5 275.3 C319.3 279.9 323.6 284.2 328.1 288.2 C332.7 292.3 337.7 295.9 342.8 299.5 C347.9 303.1 353.3 306.4 358.7 309.8 C364.0 313.1 369.6 316.3 374.8 319.7 C380.0 323.0 385.3 326.3 390.1 330.0 C394.9 333.6 399.6 337.3 403.6 341.4 C407.7 345.5 411.3 349.9 414.3 354.7 C417.2 359.6 419.6 364.8 421.3 370.4 C423.0 376.0 424.0 382.1 424.3 388.5 C424.6 394.9 423.2 405.6 423.0 409.0" stroke="#3a3a56" stroke-width="3.3" fill="none" transform="translate(-0.75,0.45)"/><path d="M292.1 191.4 C291.9 194.6 290.8 204.1 290.9 210.2 C291.0 216.3 291.7 222.3 292.8 228.1 C294.0 233.9 295.6 239.6 297.7 245.1 C299.8 250.5 302.4 255.8 305.3 260.8 C308.3 265.9 311.8 270.7 315.5 275.3 C319.3 279.9 323.6 284.2 328.1 288.2 C332.7 292.3 337.7 295.9 342.8 299.5 C347.9 303.1 353.3 306.4 358.7 309.8 C364.0 313.1 369.6 316.3 374.8 319.7 C380.0 323.0 385.3 326.3 390.1 330.0 C394.9 333.6 399.6 337.3 403.6 341.4 C407.7 345.5 411.3 349.9 414.3 354.7 C417.2 359.6 419.6 364.8 421.3 370.4 C423.0 376.0 424.0 382.1 424.3 388.5 C424.6 394.9 423.2 405.6 423.0 409.0" stroke="#a9a9da" stroke-width="3.0" fill="none"/><path d="M292.1 191.4 C291.9 194.6 290.8 204.1 290.9 210.2 C291.0 216.3 291.7 222.3 292.8 228.1 C294.0 233.9 295.6 239.6 297.7 245.1 C299.8 250.5 302.4 255.8 305.3 260.8 C308.3 265.9 311.8 270.7 315.5 275.3 C319.3 279.9 323.6 284.2 328.1 288.2 C332.7 292.3 337.7 295.9 342.8 299.5 C347.9 303.1 353.3 306.4 358.7 309.8 C364.0 313.1 369.6 316.3 374.8 319.7 C380.0 323.0 385.3 326.3 390.1 330.0 C394.9 333.6 399.6 337.3 403.6 341.4 C407.7 345.5 411.3 349.9 414.3 354.7 C417.2 359.6 419.6 364.8 421.3 370.4 C423.0 376.0 424.0 382.1 424.3 388.5 C424.6 394.9 423.2 405.6 423.0 409.0" stroke="#bcbcf0" stroke-width="1.3" fill="none" transform="translate(-0.5,0.3)"/><path d="M387.2 328.0 C387.7 328.3 387.4 327.7 390.1 330.0 C392.9 332.2 399.6 337.3 403.6 341.4 C407.7 345.5 411.3 349.9 414.3 354.7 C417.2 359.6 419.6 364.8 421.3 370.4 C423.0 376.0 424.0 382.1 424.3 388.5 C424.6 394.9 423.2 405.6 423.0 409.0" stroke="#4aae88" stroke-width="3.2" fill="none"/><path d="M308.1 189.0 C307.8 192.2 306.6 201.9 306.7 208.1 C306.7 214.4 307.1 220.5 308.3 226.5 C309.6 232.5 311.5 238.3 314.0 243.9 C316.4 249.4 319.6 254.8 323.1 260.0 C326.6 265.1 330.6 270.0 335.0 274.6 C339.3 279.1 344.1 283.4 349.1 287.4 C354.0 291.4 359.4 294.9 364.7 298.4 C370.0 301.9 375.6 304.9 381.0 308.2 C386.4 311.4 391.9 314.4 397.0 317.8 C402.1 321.1 407.2 324.4 411.7 328.3 C416.3 332.1 420.6 336.1 424.2 340.8 C427.9 345.4 431.1 350.5 433.6 356.3 C436.0 362.2 437.6 369.0 438.7 375.9 C439.8 382.8 440.0 391.0 440.2 397.5 C440.4 404.0 440.0 412.1 440.0 415.0" stroke="#3a3a56" stroke-width="3.3" fill="none" transform="translate(-0.75,0.45)"/><path d="M308.1 189.0 C307.8 192.2 306.6 201.9 306.7 208.1 C306.7 214.4 307.1 220.5 308.3 226.5 C309.6 232.5 311.5 238.3 314.0 243.9 C316.4 249.4 319.6 254.8 323.1 260.0 C326.6 265.1 330.6 270.0 335.0 274.6 C339.3 279.1 344.1 283.4 349.1 287.4 C354.0 291.4 359.4 294.9 364.7 298.4 C370.0 301.9 375.6 304.9 381.0 308.2 C386.4 311.4 391.9 314.4 397.0 317.8 C402.1 321.1 407.2 324.4 411.7 328.3 C416.3 332.1 420.6 336.1 424.2 340.8 C427.9 345.4 431.1 350.5 433.6 356.3 C436.0 362.2 437.6 369.0 438.7 375.9 C439.8 382.8 440.0 391.0 440.2 397.5 C440.4 404.0 440.0 412.1 440.0 415.0" stroke="#a9a9da" stroke-width="3.0" fill="none"/><path d="M308.1 189.0 C307.8 192.2 306.6 201.9 306.7 208.1 C306.7 214.4 307.1 220.5 308.3 226.5 C309.6 232.5 311.5 238.3 314.0 243.9 C316.4 249.4 319.6 254.8 323.1 260.0 C326.6 265.1 330.6 270.0 335.0 274.6 C339.3 279.1 344.1 283.4 349.1 287.4 C354.0 291.4 359.4 294.9 364.7 298.4 C370.0 301.9 375.6 304.9 381.0 308.2 C386.4 311.4 391.9 314.4 397.0 317.8 C402.1 321.1 407.2 324.4 411.7 328.3 C416.3 332.1 420.6 336.1 424.2 340.8 C427.9 345.4 431.1 350.5 433.6 356.3 C436.0 362.2 437.6 369.0 438.7 375.9 C439.8 382.8 440.0 391.0 440.2 397.5 C440.4 404.0 440.0 412.1 440.0 415.0" stroke="#bcbcf0" stroke-width="1.3" fill="none" transform="translate(-0.5,0.3)"/><path d="M404.3 323.0 C405.6 323.9 408.4 325.3 411.7 328.3 C415.1 331.2 420.6 336.1 424.2 340.8 C427.9 345.4 431.1 350.5 433.6 356.3 C436.0 362.2 437.6 369.0 438.7 375.9 C439.8 382.8 440.0 391.0 440.2 397.5 C440.4 404.0 440.0 412.1 440.0 415.0" stroke="#4aae88" stroke-width="3.2" fill="none"/><path d="M324.1 185.5 C323.9 188.9 322.6 199.3 322.8 205.9 C323.0 212.6 323.8 219.1 325.2 225.3 C326.6 231.5 328.7 237.6 331.3 243.3 C334.0 248.9 337.3 254.4 341.1 259.3 C345.0 264.3 349.6 268.9 354.6 273.1 C359.7 277.3 365.4 281.0 371.2 284.6 C377.0 288.2 383.3 291.5 389.4 294.9 C395.5 298.3 401.8 301.4 407.7 304.9 C413.6 308.4 419.4 311.8 424.6 315.7 C429.7 319.6 434.5 323.7 438.5 328.3 C442.5 332.9 445.9 337.9 448.6 343.4 C451.2 348.8 453.2 354.7 454.7 360.8 C456.2 366.9 457.1 373.5 457.7 380.1 C458.4 386.7 458.6 393.6 458.7 400.5 C458.9 407.4 458.6 417.9 458.6 421.4" stroke="#3a3a56" stroke-width="3.3" fill="none" transform="translate(-0.75,0.45)"/><path d="M324.1 185.5 C323.9 188.9 322.6 199.3 322.8 205.9 C323.0 212.6 323.8 219.1 325.2 225.3 C326.6 231.5 328.7 237.6 331.3 243.3 C334.0 248.9 337.3 254.4 341.1 259.3 C345.0 264.3 349.6 268.9 354.6 273.1 C359.7 277.3 365.4 281.0 371.2 284.6 C377.0 288.2 383.3 291.5 389.4 294.9 C395.5 298.3 401.8 301.4 407.7 304.9 C413.6 308.4 419.4 311.8 424.6 315.7 C429.7 319.6 434.5 323.7 438.5 328.3 C442.5 332.9 445.9 337.9 448.6 343.4 C451.2 348.8 453.2 354.7 454.7 360.8 C456.2 366.9 457.1 373.5 457.7 380.1 C458.4 386.7 458.6 393.6 458.7 400.5 C458.9 407.4 458.6 417.9 458.6 421.4" stroke="#a9a9da" stroke-width="3.0" fill="none"/><path d="M324.1 185.5 C323.9 188.9 322.6 199.3 322.8 205.9 C323.0 212.6 323.8 219.1 325.2 225.3 C326.6 231.5 328.7 237.6 331.3 243.3 C334.0 248.9 337.3 254.4 341.1 259.3 C345.0 264.3 349.6 268.9 354.6 273.1 C359.7 277.3 365.4 281.0 371.2 284.6 C377.0 288.2 383.3 291.5 389.4 294.9 C395.5 298.3 401.8 301.4 407.7 304.9 C413.6 308.4 419.4 311.8 424.6 315.7 C429.7 319.6 434.5 323.7 438.5 328.3 C442.5 332.9 445.9 337.9 448.6 343.4 C451.2 348.8 453.2 354.7 454.7 360.8 C456.2 366.9 457.1 373.5 457.7 380.1 C458.4 386.7 458.6 393.6 458.7 400.5 C458.9 407.4 458.6 417.9 458.6 421.4" stroke="#bcbcf0" stroke-width="1.3" fill="none" transform="translate(-0.5,0.3)"/><path d="M428.2 319.0 C429.9 320.6 435.1 324.3 438.5 328.3 C441.9 332.4 445.9 337.9 448.6 343.4 C451.2 348.8 453.2 354.7 454.7 360.8 C456.2 366.9 457.1 373.5 457.7 380.1 C458.4 386.7 458.6 393.6 458.7 400.5 C458.9 407.4 458.6 417.9 458.6 421.4" stroke="#4aae88" stroke-width="3.2" fill="none"/><path d="M342.1 182.3 C341.8 185.8 340.7 196.2 340.8 203.0 C341.0 209.7 341.6 216.6 343.0 223.0 C344.4 229.4 346.5 235.6 349.4 241.1 C352.3 246.7 356.2 251.7 360.4 256.4 C364.7 261.1 369.8 265.3 375.1 269.3 C380.4 273.3 386.3 277.0 392.1 280.5 C398.0 284.1 404.3 287.4 410.4 290.7 C416.5 294.1 422.7 297.2 428.6 300.6 C434.4 304.0 440.3 307.4 445.5 311.2 C450.7 315.0 455.7 318.9 459.9 323.4 C464.0 327.8 467.7 332.6 470.4 338.0 C473.2 343.4 475.0 349.5 476.3 355.9 C477.7 362.2 478.2 369.2 478.5 376.0 C478.9 382.9 478.6 390.2 478.5 397.2 C478.4 404.2 478.1 414.5 478.0 418.0" stroke="#3a3a56" stroke-width="3.3" fill="none" transform="translate(-0.75,0.45)"/><path d="M342.1 182.3 C341.8 185.8 340.7 196.2 340.8 203.0 C341.0 209.7 341.6 216.6 343.0 223.0 C344.4 229.4 346.5 235.6 349.4 241.1 C352.3 246.7 356.2 251.7 360.4 256.4 C364.7 261.1 369.8 265.3 375.1 269.3 C380.4 273.3 386.3 277.0 392.1 280.5 C398.0 284.1 404.3 287.4 410.4 290.7 C416.5 294.1 422.7 297.2 428.6 300.6 C434.4 304.0 440.3 307.4 445.5 311.2 C450.7 315.0 455.7 318.9 459.9 323.4 C464.0 327.8 467.7 332.6 470.4 338.0 C473.2 343.4 475.0 349.5 476.3 355.9 C477.7 362.2 478.2 369.2 478.5 376.0 C478.9 382.9 478.6 390.2 478.5 397.2 C478.4 404.2 478.1 414.5 478.0 418.0" stroke="#a9a9da" stroke-width="3.0" fill="none"/><path d="M342.1 182.3 C341.8 185.8 340.7 196.2 340.8 203.0 C341.0 209.7 341.6 216.6 343.0 223.0 C344.4 229.4 346.5 235.6 349.4 241.1 C352.3 246.7 356.2 251.7 360.4 256.4 C364.7 261.1 369.8 265.3 375.1 269.3 C380.4 273.3 386.3 277.0 392.1 280.5 C398.0 284.1 404.3 287.4 410.4 290.7 C416.5 294.1 422.7 297.2 428.6 300.6 C434.4 304.0 440.3 307.4 445.5 311.2 C450.7 315.0 455.7 318.9 459.9 323.4 C464.0 327.8 467.7 332.6 470.4 338.0 C473.2 343.4 475.0 349.5 476.3 355.9 C477.7 362.2 478.2 369.2 478.5 376.0 C478.9 382.9 478.6 390.2 478.5 397.2 C478.4 404.2 478.1 414.5 478.0 418.0" stroke="#bcbcf0" stroke-width="1.3" fill="none" transform="translate(-0.5,0.3)"/><path d="M361.0 179.4 C361.0 246.0 357.4 251.5 483.5 313.0" stroke="#3a3a56" stroke-width="3.3" fill="none" transform="translate(-0.75,0.45)"/><path d="M361.0 179.4 C361.0 246.0 357.4 251.5 483.5 313.0" stroke="#a9a9da" stroke-width="3.0" fill="none"/><path d="M361.0 179.4 C361.0 246.0 357.4 251.5 483.5 313.0" stroke="#bcbcf0" stroke-width="1.3" fill="none" transform="translate(-0.5,0.3)"/><path d="M380.0 175.6 C380.0 238.8 384.2 253.0 499.0 300.5" stroke="#3a3a56" stroke-width="3.3" fill="none" transform="translate(-0.75,0.45)"/><path d="M380.0 175.6 C380.0 238.8 384.2 253.0 499.0 300.5" stroke="#a9a9da" stroke-width="3.0" fill="none"/><path d="M380.0 175.6 C380.0 238.8 384.2 253.0 499.0 300.5" stroke="#bcbcf0" stroke-width="1.3" fill="none" transform="translate(-0.5,0.3)"/><path d="M400.0 172.0 C400.0 229.7 411.7 251.1 516.0 286.5" stroke="#3a3a56" stroke-width="3.3" fill="none" transform="translate(-0.75,0.45)"/><path d="M400.0 172.0 C400.0 229.7 411.7 251.1 516.0 286.5" stroke="#a9a9da" stroke-width="3.0" fill="none"/><path d="M400.0 172.0 C400.0 229.7 411.7 251.1 516.0 286.5" stroke="#bcbcf0" stroke-width="1.3" fill="none" transform="translate(-0.5,0.3)"/><path d="M421.0 168.4 C421.0 219.8 439.2 246.3 530.0 270.5" stroke="#3a3a56" stroke-width="3.3" fill="none" transform="translate(-0.75,0.45)"/><path d="M421.0 168.4 C421.0 219.8 439.2 246.3 530.0 270.5" stroke="#a9a9da" stroke-width="3.0" fill="none"/><path d="M421.0 168.4 C421.0 219.8 439.2 246.3 530.0 270.5" stroke="#bcbcf0" stroke-width="1.3" fill="none" transform="translate(-0.5,0.3)"/><path d="M443.0 165.0 C443.0 210.0 467.6 240.4 549.0 256.0" stroke="#3a3a56" stroke-width="3.3" fill="none" transform="translate(-0.75,0.45)"/><path d="M443.0 165.0 C443.0 210.0 467.6 240.4 549.0 256.0" stroke="#a9a9da" stroke-width="3.0" fill="none"/><path d="M443.0 165.0 C443.0 210.0 467.6 240.4 549.0 256.0" stroke="#bcbcf0" stroke-width="1.3" fill="none" transform="translate(-0.5,0.3)"/><path d="M466.0 161.0 C466.0 199.9 495.8 232.7 566.0 241.0" stroke="#3a3a56" stroke-width="3.3" fill="none" transform="translate(-0.75,0.45)"/><path d="M466.0 161.0 C466.0 199.9 495.8 232.7 566.0 241.0" stroke="#a9a9da" stroke-width="3.0" fill="none"/><path d="M466.0 161.0 C466.0 199.9 495.8 232.7 566.0 241.0" stroke="#bcbcf0" stroke-width="1.3" fill="none" transform="translate(-0.5,0.3)"/><path d="M489.0 157.5 C489.0 189.7 523.5 223.0 584.0 225.7" stroke="#3a3a56" stroke-width="3.3" fill="none" transform="translate(-0.75,0.45)"/><path d="M489.0 157.5 C489.0 189.7 523.5 223.0 584.0 225.7" stroke="#a9a9da" stroke-width="3.0" fill="none"/><path d="M489.0 157.5 C489.0 189.7 523.5 223.0 584.0 225.7" stroke="#bcbcf0" stroke-width="1.3" fill="none" transform="translate(-0.5,0.3)"/><path d="M513.0 153.0 C513.0 179.0 549.4 211.4 598.0 210.0" stroke="#3a3a56" stroke-width="3.3" fill="none" transform="translate(-0.75,0.45)"/><path d="M513.0 153.0 C513.0 179.0 549.4 211.4 598.0 210.0" stroke="#a9a9da" stroke-width="3.0" fill="none"/><path d="M513.0 153.0 C513.0 179.0 549.4 211.4 598.0 210.0" stroke="#bcbcf0" stroke-width="1.3" fill="none" transform="translate(-0.5,0.3)"/><path d="M541.0 149.0 C541.0 168.9 577.1 198.8 614.0 195.0" stroke="#3a3a56" stroke-width="3.3" fill="none" transform="translate(-0.75,0.45)"/><path d="M541.0 149.0 C541.0 168.9 577.1 198.8 614.0 195.0" stroke="#a9a9da" stroke-width="3.0" fill="none"/><path d="M541.0 149.0 C541.0 168.9 577.1 198.8 614.0 195.0" stroke="#bcbcf0" stroke-width="1.3" fill="none" transform="translate(-0.5,0.3)"/><path d="M566.0 144.0 C566.0 158.5 601.8 185.0 630.0 180.0" stroke="#3a3a56" stroke-width="3.3" fill="none" transform="translate(-0.75,0.45)"/><path d="M566.0 144.0 C566.0 158.5 601.8 185.0 630.0 180.0" stroke="#a9a9da" stroke-width="3.0" fill="none"/><path d="M566.0 144.0 C566.0 158.5 601.8 185.0 630.0 180.0" stroke="#bcbcf0" stroke-width="1.3" fill="none" transform="translate(-0.5,0.3)"/><path d="M594.0 139.0 C594.0 150.4 626.5 168.9 646.0 164.0" stroke="#3a3a56" stroke-width="3.3" fill="none" transform="translate(-0.75,0.45)"/><path d="M594.0 139.0 C594.0 150.4 626.5 168.9 646.0 164.0" stroke="#a9a9da" stroke-width="3.0" fill="none"/><path d="M594.0 139.0 C594.0 150.4 626.5 168.9 646.0 164.0" stroke="#bcbcf0" stroke-width="1.3" fill="none" transform="translate(-0.5,0.3)"/><path d="M622.0 134.0 C622.0 142.4 649.6 153.0 662.0 149.0" stroke="#3a3a56" stroke-width="3.3" fill="none" transform="translate(-0.75,0.45)"/><path d="M622.0 134.0 C622.0 142.4 649.6 153.0 662.0 149.0" stroke="#a9a9da" stroke-width="3.0" fill="none"/><path d="M622.0 134.0 C622.0 142.4 649.6 153.0 662.0 149.0" stroke="#bcbcf0" stroke-width="1.3" fill="none" transform="translate(-0.5,0.3)"/><path d="M176.2 269.2 C182.0 272.7 198.7 283.2 211.2 290.3 C223.7 297.4 237.9 304.8 251.2 311.8 C264.5 318.8 277.9 325.4 291.2 332.3 C304.5 339.2 324.4 349.6 331.0 353.0" stroke="#9090a8" stroke-width="4" fill="none" opacity=".55"/><path d="M146.0 226.0 C146.4 229.2 146.3 239.0 148.5 245.0 C150.7 251.0 154.6 257.6 159.0 262.0 C163.4 266.4 166.5 266.3 175.0 271.4 C183.5 276.5 197.5 285.4 210.0 292.5 C222.5 299.6 236.7 307.0 250.0 314.0 C263.3 321.0 276.7 327.6 290.0 334.5 C303.3 341.4 323.2 351.8 329.8 355.2" stroke="#e060e0" stroke-width=".9" fill="none"/><path d="M144.0 231.0 C144.2 234.0 143.8 243.2 145.5 249.0 C147.2 254.8 149.1 261.2 154.0 266.0 C158.9 270.8 165.7 271.8 175.0 277.5 C184.3 283.2 197.5 293.0 210.0 300.2 C222.5 307.4 233.5 311.9 250.0 320.5 C266.5 329.1 295.4 344.1 309.2 352.0 C323.0 359.9 329.0 365.3 333.0 368.0" stroke="#e060e0" stroke-width=".9" fill="none"/><path d="M145.5 228.5 C145.8 231.6 145.6 241.1 147.5 247.0 C149.4 252.9 152.3 259.4 157.0 264.0 C161.7 268.6 166.6 269.1 175.5 274.4 C184.4 279.8 198.0 289.2 210.5 296.4 C223.0 303.5 235.6 309.4 250.5 317.2 C265.4 325.1 286.5 335.9 300.1 343.2 C313.7 350.6 326.6 358.5 331.9 361.6" stroke="#a8a8b0" stroke-width="1.5" fill="none"/><path d="M145.0 232.6 C145.2 235.6 144.8 244.8 146.5 250.6 C148.2 256.4 150.1 262.9 155.0 267.6 C159.9 272.4 166.7 273.4 176.0 279.1 C185.3 284.8 198.5 294.6 211.0 301.8 C223.5 309.0 234.5 313.5 251.0 322.1 C267.5 330.7 300.3 348.4 310.2 353.6" stroke="#3a8a8a" stroke-width=".7" fill="none"/><path d="M330 357L350 369L352 392L336 370z" fill="#6a6ab2"/><path d="M330 357L350 369M336 362L352 380" stroke="#e060e0" stroke-width=".8" fill="none"/><path d="M350.0 371.0 C352.5 372.5 360.3 377.2 365.0 380.0 C369.7 382.8 373.5 385.3 378.0 388.0 C382.5 390.7 387.2 393.5 392.0 396.0 C396.8 398.5 402.0 400.8 407.0 403.0 C412.0 405.2 416.7 407.0 422.0 409.0 C427.3 411.0 433.0 413.0 439.0 415.0 C445.0 417.0 454.2 419.8 458.0 421.0 C461.8 422.2 461.3 421.8 462.0 422.0 L462.0 437.0 L430.0 425.0 L390.0 410.0 L352.0 392.0z" fill="#6a6ab0"/><path d="M350.0 369.8 C352.5 371.3 360.3 376.0 365.0 378.8 C369.7 381.6 373.5 384.1 378.0 386.8 C382.5 389.5 387.2 392.3 392.0 394.8 C396.8 397.3 402.0 399.6 407.0 401.8 C412.0 404.0 416.7 405.8 422.0 407.8 C427.3 409.8 433.0 411.8 439.0 413.8 C445.0 415.8 454.2 418.6 458.0 419.8 C461.8 421.0 461.3 420.6 462.0 420.8" stroke="#8a8aa8" stroke-width="1.2" fill="none"/><path d="M350.0 371.0 C352.5 372.5 360.3 377.2 365.0 380.0 C369.7 382.8 373.5 385.3 378.0 388.0 C382.5 390.7 387.2 393.5 392.0 396.0 C396.8 398.5 402.0 400.8 407.0 403.0 C412.0 405.2 416.7 407.0 422.0 409.0 C427.3 411.0 433.0 413.0 439.0 415.0 C445.0 417.0 454.2 419.8 458.0 421.0 C461.8 422.2 461.3 421.8 462.0 422.0" stroke="#e060e0" stroke-width=".8" fill="none"/><path d="M352.0 382.0 C358.3 385.0 377.0 394.2 390.0 400.0 C403.0 405.8 418.0 411.7 430.0 416.5 C442.0 421.3 456.7 426.9 462.0 429.0" stroke="#e060e0" stroke-width=".8" fill="none"/><path d="M352.0 392.0 C358.3 395.0 377.0 404.5 390.0 410.0 C403.0 415.5 418.0 420.5 430.0 425.0 C442.0 429.5 456.7 435.0 462.0 437.0" stroke="#e060e0" stroke-width=".8" fill="none"/><path d="M350 371L352 392" stroke="#9a9ad0" stroke-width=".8"/><path d="M352.5 384.5 C358.8 387.5 377.5 396.8 390.5 402.5 C403.5 408.2 418.5 414.2 430.5 419.0 C442.5 423.8 457.2 429.4 462.5 431.5" stroke="#585898" stroke-width="1.2" fill="none" opacity=".6"/><path d="M476 316L499 315L471.5 438L460.5 436L462 430L484 340z" fill="#6c6cba" fill-opacity=".9"/><path d="M476 316L496 317L484 340z" fill="#a6a6c8"/><path d="M484 340L462 430" stroke="#e060e0" stroke-width=".8"/><path d="M499 315L471.5 438" stroke="#c4c4ee" stroke-width="1.5"/><path d="M473.0 340.0 C473.4 345.0 474.8 360.0 475.5 370.0 C476.2 380.0 476.6 392.0 477.0 400.0 C477.4 408.0 477.8 415.0 478.0 418.0" stroke="#b0b0d8" stroke-width="2.2" fill="none" opacity=".8"/><path d="M662.99 146L666.35 156L495.95 316L476.95 316z" fill="#7074b0"/><path d="M663 141.3L668 141.7L663.99 146L482.95 316L476.95 316z" fill="#50566a"/><path d="M663.00 141.30L476.95 316.00" stroke="#e060e0" stroke-width=".9" fill="none"/><path d="M664.49 146.00L483.45 316.00 M666.23 150.00L489.45 316.00 M667.04 153.00L493.45 316.00" stroke="#d860e0" stroke-width=".8" fill="none"/><path d="M665.36 148.00L486.45 316.00" stroke="#8286b8" stroke-width="2" fill="none"/><path d="M666.35 156.00L495.95 316.00" stroke="#505070" stroke-width=".9" fill="none"/><path d="M474.5 311.8L486.5 313.8" stroke="#8a9a94" stroke-width="2.6" opacity=".85"/><path d="M490.0 299.3L502.0 301.3" stroke="#8a9a94" stroke-width="2.6" opacity=".85"/><path d="M507.0 285.3L519.0 287.3" stroke="#8a9a94" stroke-width="2.6" opacity=".85"/><path d="M521.0 269.3L533.0 271.3" stroke="#8a9a94" stroke-width="2.6" opacity=".85"/><path d="M540.0 254.8L552.0 256.8" stroke="#8a9a94" stroke-width="2.6" opacity=".85"/><path d="M557.0 239.8L569.0 241.8" stroke="#8a9a94" stroke-width="2.6" opacity=".85"/><path d="M575.0 224.5L587.0 226.5" stroke="#8a9a94" stroke-width="2.6" opacity=".85"/><path d="M589.0 208.8L601.0 210.8" stroke="#8a9a94" stroke-width="2.6" opacity=".85"/><path d="M605.0 193.8L617.0 195.8" stroke="#8a9a94" stroke-width="2.6" opacity=".85"/><path d="M621.0 178.8L633.0 180.8" stroke="#8a9a94" stroke-width="2.6" opacity=".85"/><path d="M637.0 162.8L649.0 164.8" stroke="#8a9a94" stroke-width="2.6" opacity=".85"/><path d="M653.0 147.8L665.0 149.8" stroke="#8a9a94" stroke-width="2.6" opacity=".85"/></g></svg>
<div class="a" style="left:0px;top:514px;width:700px;height:11px;background:#eeebe6;"></div>
<div class="a" style="left:0px;top:514px;width:700px;height:1.5px;background:#fafafa;"></div>
<div class="a" style="left:0px;top:523px;width:700px;height:2px;background:#8c98a6;"></div>
<div class="a" style="left:0px;top:514.3px;width:111px;height:1.2px;background:#b4b4b4;"></div>
<div class="t" style="left:281px;top:516px;font-size:6.5px;color:#111;transform:scaleX(0.86);transform-origin:0 0;">L:0</div>
<div class="t" style="left:499px;top:516px;font-size:6.5px;color:#111;transform:scaleX(0.86);transform-origin:0 0;">Lat -3.5</div>
<div class="t" style="left:541px;top:516px;font-size:6.5px;color:#111;transform:scaleX(0.86);transform-origin:0 0;">Lon 16.0</div>
<div class="t" style="left:587px;top:516px;font-size:6.5px;color:#111;transform:scaleX(0.86);transform-origin:0 0;">Radius 7.52</div>
<div class="t" style="left:651px;top:516px;font-size:6.5px;color:#111;transform:scaleX(0.86);transform-origin:0 0;">Tilt 0.0</div>
<div class="a" style="left:439.4px;top:515.5px;width:1px;height:8px;background:#d5d5d5;"></div>
<div class="a" style="left:495.9px;top:515.5px;width:1px;height:8px;background:#d5d5d5;"></div>
<div class="a" style="left:539.3px;top:515.5px;width:1px;height:8px;background:#d5d5d5;"></div>
<div class="a" style="left:583.6px;top:515.5px;width:1px;height:8px;background:#d5d5d5;"></div>
<div class="a" style="left:647px;top:515.5px;width:1px;height:8px;background:#d5d5d5;"></div>
</body></html>
